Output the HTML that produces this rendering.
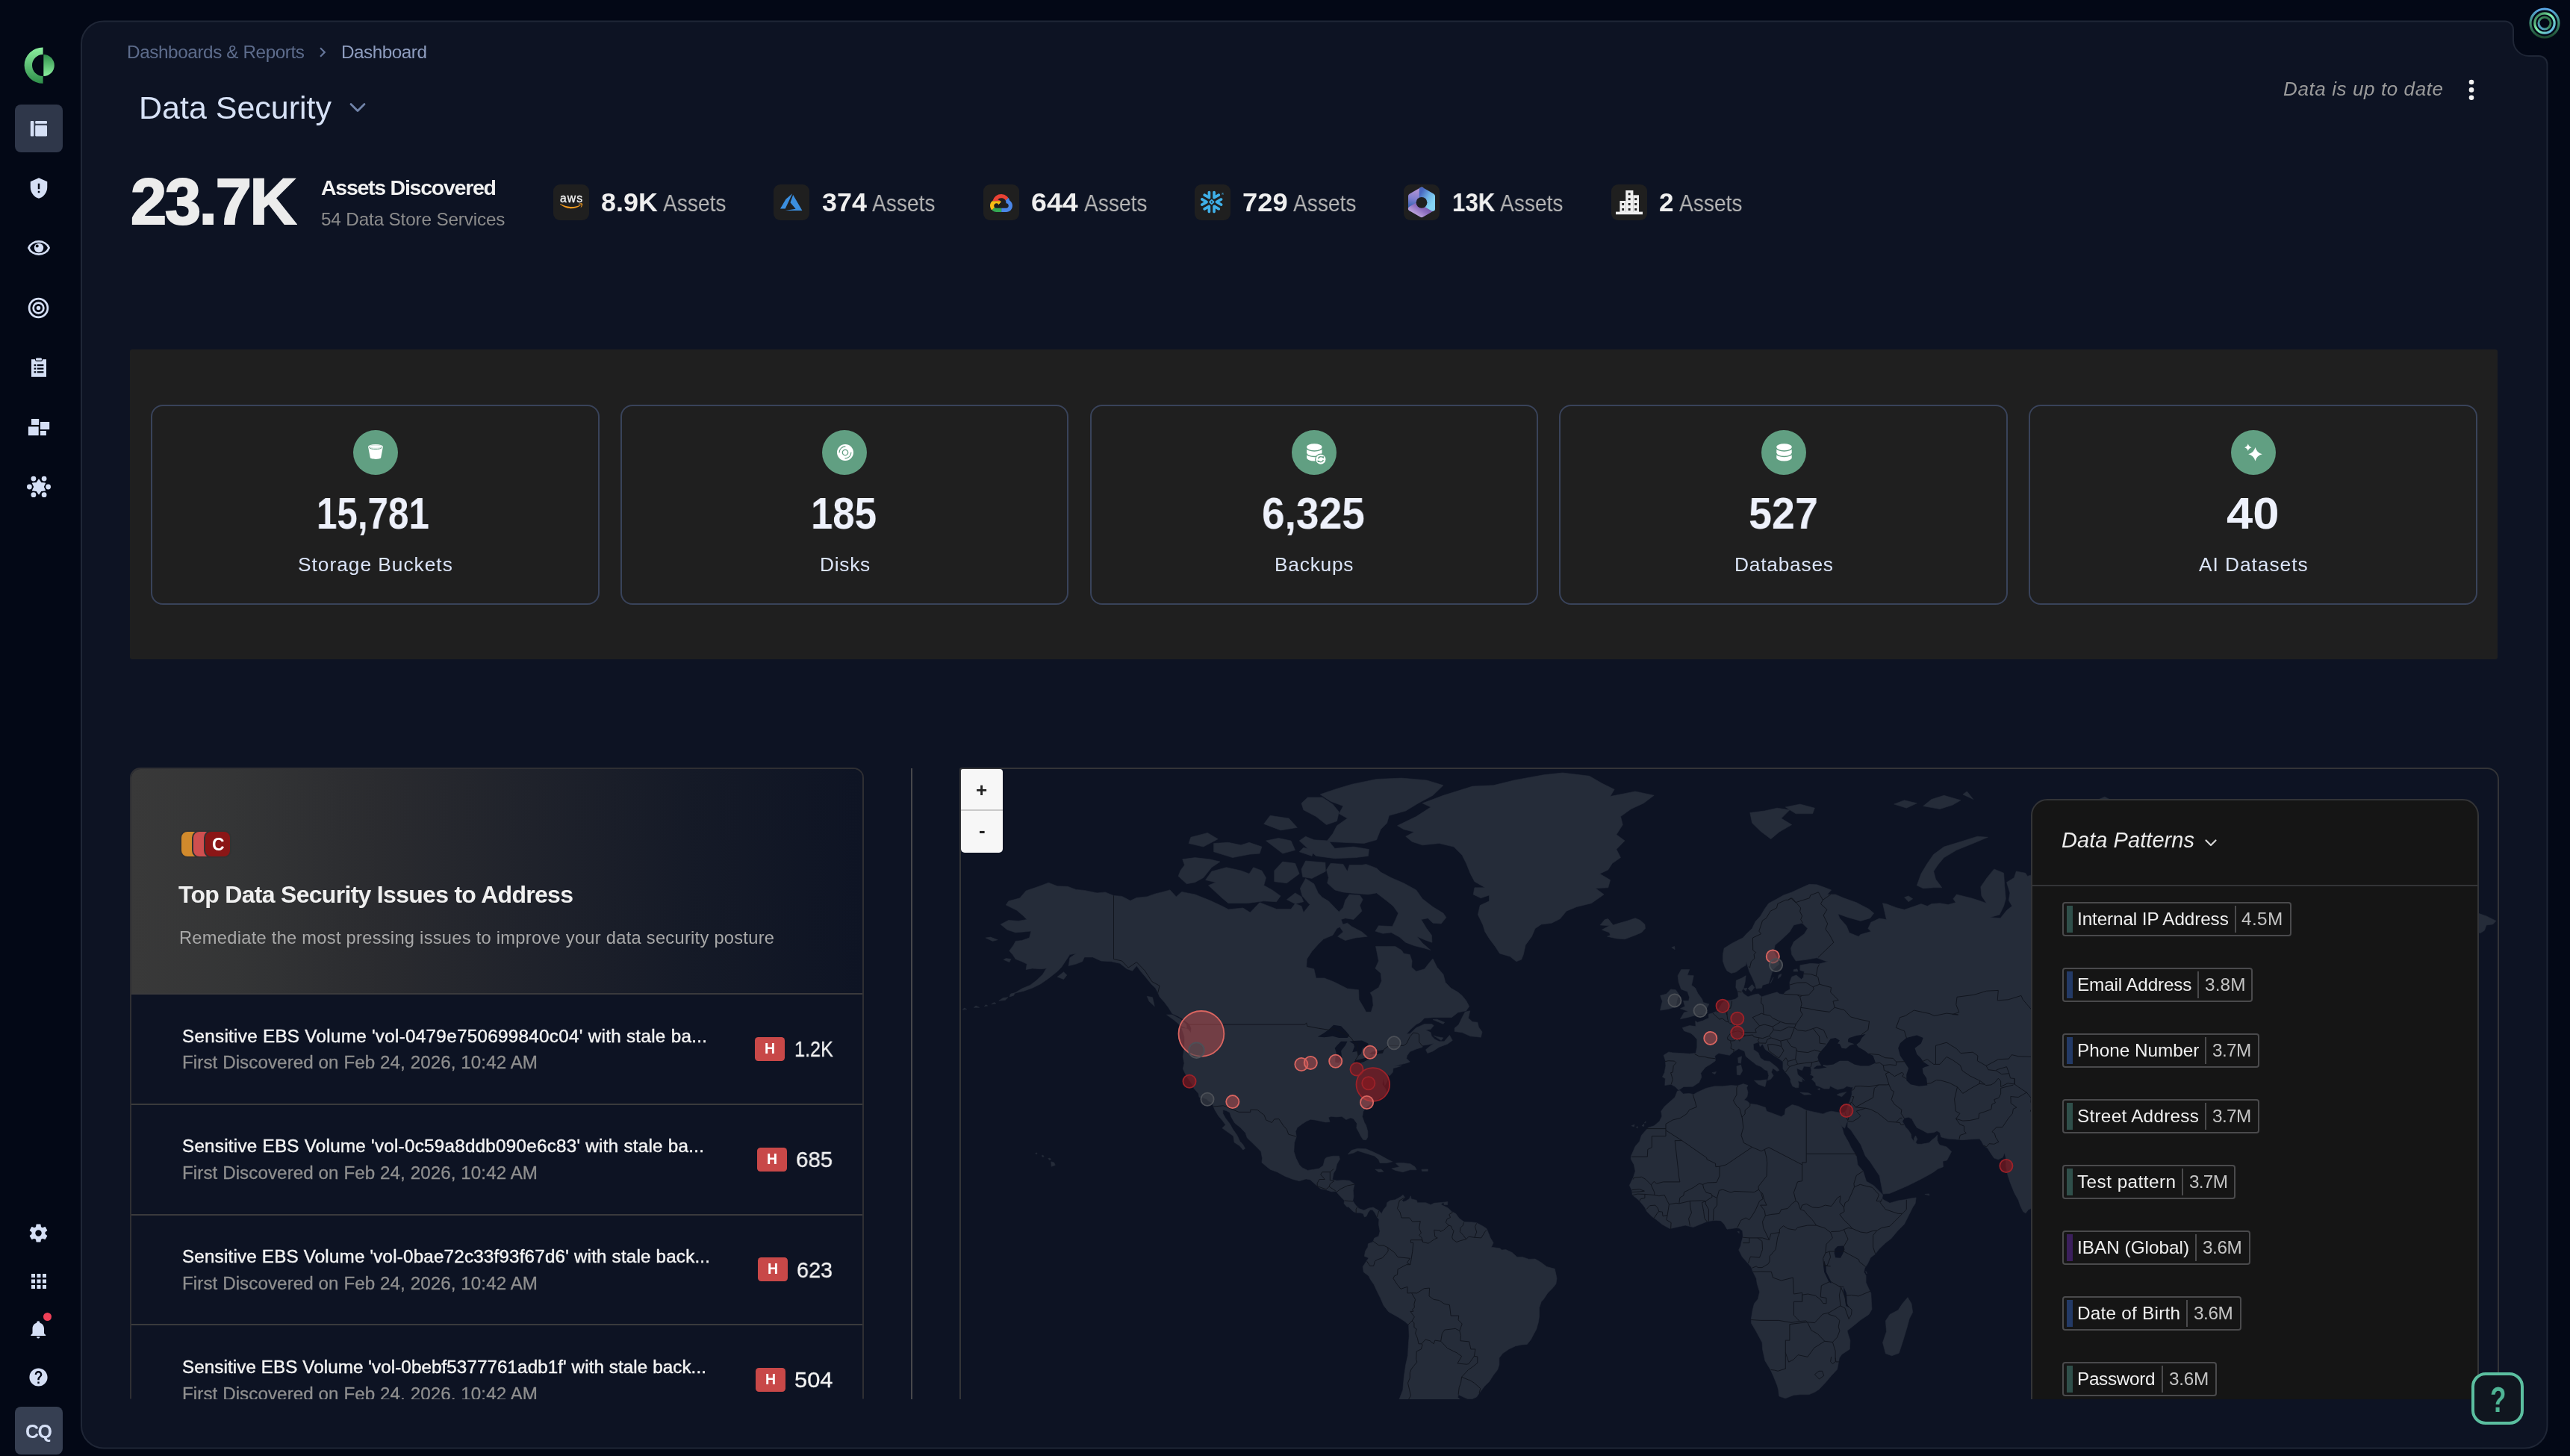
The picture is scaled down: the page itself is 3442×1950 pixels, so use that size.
<!DOCTYPE html>
<html lang="en"><head><meta charset="utf-8"><title>Data Security Dashboard</title>
<style>
html,body{margin:0;padding:0;}
body{width:3442px;height:1950px;overflow:hidden;position:relative;background:#030816;font-family:"Liberation Sans",sans-serif;}
.abs{position:absolute;}
.t{position:absolute;white-space:nowrap;line-height:1;transform-origin:0 50%;will-change:transform;}
svg{position:absolute;overflow:visible;}
.bx{position:absolute;box-sizing:border-box;}
.sk2{-webkit-text-stroke:2.2px #ececec;}
.sk3{-webkit-text-stroke:0.3px #f2f2f2;}
.sk4{-webkit-text-stroke:0.45px #f2f2f2;}
.sk5{-webkit-text-stroke:0.3px #8f8f8f;}

</style></head>
<body>
<svg width="3442" height="1950" viewBox="0 0 3442 1950" style="left:0;top:0"><defs><linearGradient id="lg1" x1="0" y1="0" x2="0" y2="1"><stop offset="0" stop-color="#8cf0a0"/><stop offset="1" stop-color="#2f8f4a"/></linearGradient><linearGradient id="lg2" x1="0" y1="0" x2="0" y2="1"><stop offset="0" stop-color="#2f8f4a"/><stop offset="1" stop-color="#8cf0a0"/></linearGradient><linearGradient id="orb1" x1="0" y1="0" x2="0" y2="1"><stop offset="0" stop-color="#5aa8e8"/><stop offset="0.5" stop-color="#3f8f70"/><stop offset="1" stop-color="#1d4a30"/></linearGradient><linearGradient id="orb2" x1="0" y1="0" x2="1" y2="1"><stop offset="0" stop-color="#2c6b45"/><stop offset="0.45" stop-color="#7ff0a8"/><stop offset="1" stop-color="#58a6ea"/></linearGradient><linearGradient id="orb3" x1="1" y1="0" x2="0" y2="1"><stop offset="0" stop-color="#2c6b45"/><stop offset="0.5" stop-color="#3f8f60"/><stop offset="1" stop-color="#58a6ea"/></linearGradient></defs><path d="M139 28.5H3355A11 11 0 0 1 3366 39.5V54A21 21 0 0 0 3387 75H3400.5A11 11 0 0 1 3411.5 86V1909.5A30 30 0 0 1 3381.5 1939.5H139A30 30 0 0 1 109 1909.5V58.5A30 30 0 0 1 139 28.5Z" fill="#0d1323" stroke="#1f2636" stroke-width="2"/><circle cx="3408" cy="31" r="19" fill="none" stroke="url(#orb1)" stroke-width="3.2"/><circle cx="3408" cy="31" r="13.2" fill="none" stroke="url(#orb2)" stroke-width="3.2"/><circle cx="3408" cy="31" r="8" fill="none" stroke="url(#orb3)" stroke-width="3"/><path d="M57.6 63.4A25 24.2 0 0 0 57.6 111.8V102.1A14.6 14.5 0 0 1 57.6 73.1Z" fill="url(#lg1)"/><path d="M58.3 73.1A14.5 14.5 0 0 1 58.3 102.1Z" fill="url(#lg2)"/></svg><div class="bx" style="left:20px;top:140px;width:64px;height:64px;border-radius:8px;background:#2f374a"></div><svg width="24" height="22" viewBox="0 0 24 22" style="left:40px;top:161px"><rect x="0.8" y="1" width="4.6" height="20.4" rx="1" fill="#d5dff5"/><rect x="7.2" y="1" width="15.8" height="3.8" rx="1" fill="#d5dff5"/><rect x="7.2" y="6.8" width="15.8" height="14.6" rx="1.2" fill="#d5dff5"/></svg><svg width="30" height="30" viewBox="0 0 24 24" style="left:36.8px;top:237.3px"><path d="M12 1 3 5v6c0 5.55 3.84 10.74 9 12 5.16-1.26 9-6.45 9-12V5M11 7h2v6h-2m0 2h2v2h-2" fill="#d5dff5"/></svg><svg width="32" height="22" viewBox="0 0 32 22" style="left:35.8px;top:321px"><path d="M2.4 11C7 -0.4 25 -0.4 29.6 11C25 22.4 7 22.4 2.4 11Z" fill="none" stroke="#d5dff5" stroke-width="2.8" stroke-linejoin="round"/><circle cx="16" cy="11" r="6.2" fill="#d5dff5"/><circle cx="13.7" cy="8.6" r="2" fill="#030816"/></svg><svg width="33" height="33" viewBox="0 0 24 24" style="left:35.2px;top:395.5px"><path d="M12 2A10 10 0 0 0 2 12a10 10 0 0 0 10 10 10 10 0 0 0 10-10A10 10 0 0 0 12 2m0 2a8 8 0 0 1 8 8 8 8 0 0 1-8 8 8 8 0 0 1-8-8 8 8 0 0 1 8-8m0 2a6 6 0 0 0-6 6 6 6 0 0 0 6 6 6 6 0 0 0 6-6 6 6 0 0 0-6-6m0 2a4 4 0 0 1 4 4 4 4 0 0 1-4 4 4 4 0 0 1-4-4 4 4 0 0 1 4-4m0 2a2 2 0 0 0-2 2 2 2 0 0 0 2 2 2 2 0 0 0 2-2 2 2 0 0 0-2-2" fill="#d5dff5"/></svg><svg width="24" height="28" viewBox="0 0 24 28" style="left:39.7px;top:478px"><path d="M2 3.2H22V26.8H2Z" fill="#d5dff5"/><rect x="7.5" y="1" width="9" height="4.4" rx="1.6" fill="#d5dff5" stroke="#030816" stroke-width="1.1"/><g fill="#030816"><rect x="5.6" y="10" width="2.6" height="2.2"/><rect x="9.8" y="10" width="8.6" height="2.2"/><rect x="5.6" y="14.6" width="2.6" height="2.2"/><rect x="9.8" y="14.6" width="8.6" height="2.2"/><rect x="5.6" y="19.2" width="2.6" height="2.2"/><rect x="9.8" y="19.2" width="8.6" height="2.2"/></g></svg><svg width="32" height="26" viewBox="0 0 32 26" style="left:37px;top:559px"><rect x="5" y="2" width="10.2" height="8" fill="#d5dff5"/><rect x="17" y="6" width="12.2" height="10.2" fill="#d5dff5"/><rect x="0.9" y="12.4" width="13.8" height="11.8" fill="#d5dff5"/><rect x="17" y="18" width="7.9" height="6.2" fill="#d5dff5"/></svg><svg width="32" height="28" viewBox="0 0 32 28" style="left:35.7px;top:638.3px"><polygon points="16.00,4.40 13.00,8.80 7.69,9.20 10.00,14.00 7.69,18.80 13.00,19.20 16.00,23.60 19.00,19.20 24.31,18.80 22.00,14.00 24.31,9.20 19.00,8.80" fill="#d5dff5" stroke="#d5dff5" stroke-width="1.5" stroke-linejoin="round"/><circle cx="8.9" cy="3.0999999999999996" r="3.4" fill="#d5dff5"/><circle cx="23.1" cy="3.0999999999999996" r="3.4" fill="#d5dff5"/><circle cx="3.4000000000000004" cy="14" r="3.4" fill="#d5dff5"/><circle cx="28.6" cy="14" r="3.4" fill="#d5dff5"/><circle cx="8.9" cy="24.7" r="3.4" fill="#d5dff5"/><circle cx="23.1" cy="24.7" r="3.4" fill="#d5dff5"/></svg><svg width="29" height="29" viewBox="0 0 24 24" style="left:37.2px;top:1637.2px"><path d="M12 15.5A3.5 3.5 0 0 1 8.5 12 3.5 3.5 0 0 1 12 8.5a3.5 3.5 0 0 1 3.5 3.5 3.5 3.5 0 0 1-3.5 3.5m7.43-2.53c.04-.32.07-.64.07-.97s-.03-.66-.07-1l2.11-1.63c.19-.15.24-.42.12-.64l-2-3.46c-.12-.22-.39-.31-.61-.22l-2.49 1c-.52-.39-1.06-.73-1.69-.98l-.37-2.65A.506.506 0 0 0 14 2h-4c-.25 0-.46.18-.5.42l-.37 2.65c-.63.25-1.17.59-1.69.98l-2.49-1c-.22-.09-.49 0-.61.22l-2 3.46c-.13.22-.07.49.12.64L4.57 11c-.04.34-.07.67-.07 1s.03.65.07.97l-2.11 1.66c-.19.15-.25.42-.12.64l2 3.46c.12.22.39.3.61.22l2.49-1.01c.52.4 1.06.74 1.69.99l.37 2.65c.04.24.25.42.5.42h4c.25 0 .46-.18.5-.42l.37-2.65c.63-.26 1.17-.59 1.69-.99l2.49 1.01c.22.08.49 0 .61-.22l2-3.46c.12-.22.07-.49-.12-.64z" fill="#d5dff5"/></svg><svg width="30" height="30" viewBox="0 0 24 24" style="left:36.7px;top:1701.0px"><path d="M16 20h4v-4h-4m0-2h4v-4h-4m-6-2h4V4h-4m6 4h4V4h-4m-6 10h4v-4h-4m-6 4h4v-4H4m0 10h4v-4H4m6 4h4v-4h-4M4 8h4V4H4z" fill="#d5dff5"/></svg><svg width="26.5" height="26.5" viewBox="0 0 24 24" style="left:38.2px;top:1767.2px"><path d="M21 19v1H3v-1l2-2v-6c0-3.1 2.03-5.83 5-6.71V4a2 2 0 0 1 2-2 2 2 0 0 1 2 2v.29c2.97.88 5 3.61 5 6.71v6zm-7 2a2 2 0 0 1-2 2 2 2 0 0 1-2-2" fill="#d5dff5"/></svg><div class="bx" style="left:57.5px;top:1757.5px;width:11px;height:11px;border-radius:50%;background:#ef4058"></div><svg width="29" height="29" viewBox="0 0 24 24" style="left:37.2px;top:1829.5px"><path d="m15.07 11.25-.9.92C13.45 12.89 13 13.5 13 15h-2v-.5c0-1.11.45-2.11 1.17-2.83l1.24-1.26c.37-.36.59-.86.59-1.41a2 2 0 0 0-2-2 2 2 0 0 0-2 2H8a4 4 0 0 1 4-4 4 4 0 0 1 4 4 3.2 3.2 0 0 1-.93 2.25M13 19h-2v-2h2M12 2A10 10 0 0 0 2 12a10 10 0 0 0 10 10 10 10 0 0 0 10-10c0-5.53-4.5-10-10-10" fill="#d5dff5"/></svg><div class="bx" style="left:20px;top:1884px;width:64px;height:64px;border-radius:8px;background:#363f52"></div><div class="t " id="t0" style="font-size:25px;font-weight:700;color:#d5dff5;letter-spacing:-1.500px;left:33.7px;top:1905.4px;">CQ</div><div class="t " id="t1" style="font-size:24.3px;font-weight:400;color:#5d6c8c;letter-spacing:-0.410px;left:170.0px;top:57.8px;">Dashboards &amp; Reports</div><svg width="26" height="26" viewBox="0 0 24 24" style="left:419px;top:57px"><path d="M8.59 16.58 13.17 12 8.59 7.41 10 6l6 6-6 6z" fill="#66769a"/></svg><div class="t " id="t2" style="font-size:24.3px;font-weight:400;color:#8e9dbf;letter-spacing:-0.484px;left:457.0px;top:57.8px;">Dashboard</div><div class="t " id="t3" style="font-size:43px;font-weight:400;color:#d6e1f6;letter-spacing:-0.009px;left:186.0px;top:122.6px;">Data Security</div><svg width="24" height="16" viewBox="0 0 24 16" style="left:467px;top:136px"><path d="M3 3.5L12 12.5L21 3.5" fill="none" stroke="#7184a9" stroke-width="2.8" stroke-linecap="round" stroke-linejoin="round"/></svg><div class="t " id="t4" style="font-size:26px;font-weight:400;color:#9b9b9b;font-style:italic;letter-spacing:0.599px;left:3058.0px;top:105.9px;">Data is up to date</div><svg width="10" height="34" viewBox="0 0 10 34" style="left:3304.9px;top:104px"><circle cx="5" cy="6" r="3.3" fill="#f2f2f2"/><circle cx="5" cy="16.4" r="3.3" fill="#f2f2f2"/><circle cx="5" cy="26.8" r="3.3" fill="#f2f2f2"/></svg><div class="t sk2" id="t5" style="font-size:86.5px;font-weight:700;color:#ececec;letter-spacing:-2.207px;left:174.5px;top:227.2px;">23.7K</div><div class="t " id="t6" style="font-size:28.5px;font-weight:700;color:#f1f1f1;letter-spacing:-1.254px;left:430.0px;top:237.0px;">Assets Discovered</div><div class="t " id="t7" style="font-size:24.3px;font-weight:400;color:#8c8c8c;letter-spacing:-0.159px;left:430.0px;top:281.5px;">54 Data Store Services</div><div class="bx" style="left:741.0px;top:247px;width:48px;height:48px;border-radius:9px;background:#1f1f1f"></div><div class="t " id="t8" style="font-size:34.5px;font-weight:700;color:#efefef;transform:scaleX(1.0401);left:805.2px;top:254.4px;">8.9K</div><div class="t " id="t9" style="font-size:31.5px;font-weight:400;color:#b4b4b4;transform:scaleX(0.8939);left:887.9px;top:257.0px;">Assets</div><div class="bx" style="left:1036.3px;top:247px;width:48px;height:48px;border-radius:9px;background:#1f1f1f"></div><div class="t " id="t10" style="font-size:34.5px;font-weight:700;color:#efefef;transform:scaleX(1.0423);left:1100.5px;top:254.4px;">374</div><div class="t " id="t11" style="font-size:31.5px;font-weight:400;color:#b4b4b4;transform:scaleX(0.8939);left:1167.7px;top:257.0px;">Assets</div><div class="bx" style="left:1317.4px;top:247px;width:48px;height:48px;border-radius:9px;background:#1f1f1f"></div><div class="t " id="t12" style="font-size:34.5px;font-weight:700;color:#efefef;transform:scaleX(1.0910);left:1380.7px;top:254.4px;">644</div><div class="t " id="t13" style="font-size:31.5px;font-weight:400;color:#b4b4b4;transform:scaleX(0.8939);left:1452.2px;top:257.0px;">Assets</div><div class="bx" style="left:1600.2px;top:247px;width:48px;height:48px;border-radius:9px;background:#1f1f1f"></div><div class="t " id="t14" style="font-size:34.5px;font-weight:700;color:#efefef;transform:scaleX(1.0528);left:1663.8px;top:254.4px;">729</div><div class="t " id="t15" style="font-size:31.5px;font-weight:400;color:#b4b4b4;transform:scaleX(0.8939);left:1731.6px;top:257.0px;">Assets</div><div class="bx" style="left:1880.3px;top:247px;width:48px;height:48px;border-radius:9px;background:#1f1f1f"></div><div class="t " id="t16" style="font-size:34.5px;font-weight:700;color:#efefef;transform:scaleX(0.9084);left:1945.0px;top:254.4px;">13K</div><div class="t " id="t17" style="font-size:31.5px;font-weight:400;color:#b4b4b4;transform:scaleX(0.8939);left:2009.1px;top:257.0px;">Assets</div><div class="bx" style="left:2158.1px;top:247px;width:48px;height:48px;border-radius:9px;background:#1f1f1f"></div><div class="t " id="t18" style="font-size:34.5px;font-weight:700;color:#efefef;transform:scaleX(1.0163);left:2221.8px;top:254.4px;">2</div><div class="t " id="t19" style="font-size:31.5px;font-weight:400;color:#b4b4b4;transform:scaleX(0.8939);left:2249.2px;top:257.0px;">Assets</div><svg width="30.2" height="24.16" viewBox="0 0 640 512" style="left:750.2px;top:257.8px"><path d="M578.6 369c-70 51.7-171.7 79.2-258.5 79.2C203 449 89.8 405.9 2.8 327.5c-6.5-5.9-.8-14 7.2-9.5 96.5 55.2 205.7 84.2 316.9 84.1 83-.4 165.1-17.3 241.6-49.5 11.8-5 21.8 7.8 10.1 16.4M607.8 335.7c-9-11.5-59.3-5.4-81.8-2.7-6.8.8-7.9-5.1-1.8-9.5 40.1-28.2 105.9-20.1 113.4-10.6s-2.1 75.4-39.6 106.9c-5.8 4.9-11.3 2.3-8.7-4.1 8.4-21.3 27.4-68.5 18.4-80z" fill="#f29a1f"/></svg><svg width="29.4" height="29.4" viewBox="0 0 24 24" style="left:1045.3px;top:256.1px"><path d="M5.483 21.3H24L14.025 4.013l-3.038 8.347 5.836 6.938L5.483 21.3zM13.23 2.7L6.105 8.677 0 19.253h5.505v.014L13.23 2.7z" fill="#3b8ede"/></svg><svg width="30.0" height="30.0" viewBox="0 0 24 24" style="left:1326.0px;top:257.0px"><defs><clipPath id="gcr"><polygon points="3,0 21,0 21,5 16.2,9.6 12,9.8 7.2,9.8 2.2,9.8"/></clipPath><clipPath id="gcb"><polygon points="24,4 24,24 12.1,24 12.1,16 16,12 16.2,9.6 21,5"/></clipPath><clipPath id="gcg"><polygon points="12.1,24 12.1,16 5,16.5 2.2,19.2 3,24"/></clipPath><clipPath id="gcy"><polygon points="0,8 2.2,9.8 7.2,9.8 12.5,9.8 9.2,14 5,16.5 2.2,19.2 0,20"/></clipPath></defs><path d="M12.19 2.38a9.344 9.344 0 0 0-9.234 6.893c.053-.02-.055.013 0 0-3.875 2.551-3.922 8.11-.247 10.941l.006-.007-.007.03a6.7 6.7 0 0 0 4.077 1.356h5.173l.03.03h5.192c6.687.053 9.376-8.605 3.835-12.35a9.37 9.37 0 0 0-2.821-4.552l-.043.043.006-.05A9.34 9.34 0 0 0 12.19 2.38m-.358 4.146c1.244-.04 2.518.368 3.486 1.15a5.19 5.19 0 0 1 1.862 4.078v.518c3.53-.07 3.53 5.262 0 5.193h-5.193l-.008.009v-.04H6.785a2.6 2.6 0 0 1-1.067-.23h.001a2.597 2.597 0 1 1 3.437-3.437l3.013-3.012A6.75 6.75 0 0 0 8.11 8.24c.018-.01.04-.026.054-.023a5.19 5.19 0 0 1 3.67-1.69z" fill="#e94235" clip-path="url(#gcr)"/><path d="M12.19 2.38a9.344 9.344 0 0 0-9.234 6.893c.053-.02-.055.013 0 0-3.875 2.551-3.922 8.11-.247 10.941l.006-.007-.007.03a6.7 6.7 0 0 0 4.077 1.356h5.173l.03.03h5.192c6.687.053 9.376-8.605 3.835-12.35a9.37 9.37 0 0 0-2.821-4.552l-.043.043.006-.05A9.34 9.34 0 0 0 12.19 2.38m-.358 4.146c1.244-.04 2.518.368 3.486 1.15a5.19 5.19 0 0 1 1.862 4.078v.518c3.53-.07 3.53 5.262 0 5.193h-5.193l-.008.009v-.04H6.785a2.6 2.6 0 0 1-1.067-.23h.001a2.597 2.597 0 1 1 3.437-3.437l3.013-3.012A6.75 6.75 0 0 0 8.11 8.24c.018-.01.04-.026.054-.023a5.19 5.19 0 0 1 3.67-1.69z" fill="#4a86e8" clip-path="url(#gcb)"/><path d="M12.19 2.38a9.344 9.344 0 0 0-9.234 6.893c.053-.02-.055.013 0 0-3.875 2.551-3.922 8.11-.247 10.941l.006-.007-.007.03a6.7 6.7 0 0 0 4.077 1.356h5.173l.03.03h5.192c6.687.053 9.376-8.605 3.835-12.35a9.37 9.37 0 0 0-2.821-4.552l-.043.043.006-.05A9.34 9.34 0 0 0 12.19 2.38m-.358 4.146c1.244-.04 2.518.368 3.486 1.15a5.19 5.19 0 0 1 1.862 4.078v.518c3.53-.07 3.53 5.262 0 5.193h-5.193l-.008.009v-.04H6.785a2.6 2.6 0 0 1-1.067-.23h.001a2.597 2.597 0 1 1 3.437-3.437l3.013-3.012A6.75 6.75 0 0 0 8.11 8.24c.018-.01.04-.026.054-.023a5.19 5.19 0 0 1 3.67-1.69z" fill="#34a853" clip-path="url(#gcg)"/><path d="M12.19 2.38a9.344 9.344 0 0 0-9.234 6.893c.053-.02-.055.013 0 0-3.875 2.551-3.922 8.11-.247 10.941l.006-.007-.007.03a6.7 6.7 0 0 0 4.077 1.356h5.173l.03.03h5.192c6.687.053 9.376-8.605 3.835-12.35a9.37 9.37 0 0 0-2.821-4.552l-.043.043.006-.05A9.34 9.34 0 0 0 12.19 2.38m-.358 4.146c1.244-.04 2.518.368 3.486 1.15a5.19 5.19 0 0 1 1.862 4.078v.518c3.53-.07 3.53 5.262 0 5.193h-5.193l-.008.009v-.04H6.785a2.6 2.6 0 0 1-1.067-.23h.001a2.597 2.597 0 1 1 3.437-3.437l3.013-3.012A6.75 6.75 0 0 0 8.11 8.24c.018-.01.04-.026.054-.023a5.19 5.19 0 0 1 3.67-1.69z" fill="#f9bc15" clip-path="url(#gcy)"/></svg><svg width="31.0" height="31.0" viewBox="0 0 24 24" style="left:1608.3px;top:255.3px"><path d="M24 3.459c0 .646-.418 1.18-1.141 1.18s-1.142-.534-1.142-1.18c0-.647.419-1.18 1.142-1.18S24 2.812 24 3.459m-.228 0c0-.533-.38-.951-.913-.951s-.913.38-.913.95c0 .533.38.952.913.952.57 0 .913-.419.913-.951m-1.37-.533h.495c.266 0 .456.152.456.38 0 .153-.076.229-.19.305l.19.266v.038h-.266l-.19-.266h-.229v.266h-.266zm.495.228h-.229v.267h.229c.114 0 .152-.038.152-.114.038-.077-.038-.153-.152-.153M7.602 12.4a2 2 0 0 0 .076-.456c0-.114-.038-.228-.038-.342-.114-.343-.304-.647-.646-.838l-4.87-2.777c-.685-.38-1.56-.152-1.94.533-.381.685-.153 1.56.532 1.94l2.701 1.56-2.701 1.56c-.685.38-.913 1.256-.533 1.94.38.685 1.256.914 1.94.533l4.832-2.777c.343-.267.571-.533.647-.876m1.332 2.626c-.266-.038-.57.038-.837.19l-4.832 2.777c-.685.38-.913 1.256-.532 1.94.38.686 1.255.914 1.94.533l2.701-1.56v3.12c0 .8.647 1.408 1.446 1.408s1.407-.647 1.407-1.408v-5.592c0-.761-.57-1.37-1.293-1.408m4.946-6.088c.266.038.57-.038.837-.19l4.832-2.777c.685-.38.913-1.256.532-1.94-.38-.686-1.255-.914-1.94-.533l-2.701 1.56V1.975c0-.799-.647-1.408-1.446-1.408s-1.446.609-1.446 1.408V7.53c0 .76.609 1.37 1.332 1.407zM3.265 5.97l4.832 2.777c.266.152.533.19.837.19.723-.038 1.331-.684 1.331-1.407V1.975c0-.799-.646-1.408-1.407-1.408-.799 0-1.446.647-1.446 1.408v3.12l-2.701-1.56c-.685-.38-1.56-.152-1.94.533-.419.646-.19 1.521.494 1.902m9.093 6.011a.4.4 0 0 0-.114-.266l-.57-.571a.35.35 0 0 0-.267-.114.4.4 0 0 0-.266.114l-.571.57a.4.4 0 0 0-.114.267c0 .076.038.19.114.267l.57.57a.35.35 0 0 0 .267.114.4.4 0 0 0 .266-.114l.571-.57a.4.4 0 0 0 .114-.267m1.598.533L11.94 14.53c-.039.038-.153.114-.229.114h-.608a.4.4 0 0 1-.267-.114L8.82 12.514a.4.4 0 0 1-.076-.229v-.608c0-.076.038-.19.114-.267l2.016-2.016a.4.4 0 0 1 .267-.114h.608a.4.4 0 0 1 .267.114l2.016 2.016a.35.35 0 0 1 .114.267v.608c-.076.077-.114.19-.19.229m5.593 5.44-4.832-2.777c-.266-.152-.57-.19-.837-.152-.723.038-1.332.684-1.332 1.408v5.554c0 .8.647 1.408 1.408 1.408.799 0 1.446-.647 1.446-1.408v-3.12l2.7 1.56c.686.38 1.561.152 1.941-.533.419-.646.19-1.521-.494-1.94m2.549-7.533-2.701 1.56 2.7 1.56c.686.38.914 1.256.533 1.94-.38.685-1.255.913-1.94.533l-4.832-2.778a1.64 1.64 0 0 1-.647-.798c-.037-.153-.076-.305-.076-.457 0-.114.039-.228.039-.342.114-.343.342-.647.646-.837l4.832-2.778c.685-.38 1.56-.152 1.94.533.457.609.19 1.484-.494 1.864" fill="#3fb0e8"/></svg><svg width="50" height="50" viewBox="1879.1 245.8 50 50" style="left:1879.1px;top:245.8px"><defs><linearGradient id="m1" x1="0.1" y1="0" x2="0.9" y2="0.8"><stop offset="0" stop-color="#4868c0"/><stop offset="0.55" stop-color="#6fb4e6"/><stop offset="1" stop-color="#86d6f2"/></linearGradient><linearGradient id="m2" x1="1" y1="0.1" x2="0.1" y2="0.9"><stop offset="0" stop-color="#5e3f92"/><stop offset="0.6" stop-color="#9071c0"/><stop offset="1" stop-color="#c2a8de"/></linearGradient><linearGradient id="m3" x1="0.5" y1="0" x2="0.4" y2="1"><stop offset="0" stop-color="#b193d2"/><stop offset="0.5" stop-color="#7f7fcf"/><stop offset="1" stop-color="#2f5fae"/></linearGradient></defs><path d="M1904.10 270.80L1889.38 279.30L1889.38 262.30L1904.10 253.80Z" fill="url(#m3)" stroke="url(#m3)" stroke-width="6.5" stroke-linejoin="round"/><path d="M1904.10 270.80L1918.82 279.30L1904.10 287.80L1889.38 279.30Z" fill="url(#m2)" stroke="url(#m2)" stroke-width="6.5" stroke-linejoin="round"/><path d="M1904.10 270.80L1904.10 253.80L1918.82 262.30L1918.82 279.30Z" fill="url(#m1)" stroke="url(#m1)" stroke-width="6.5" stroke-linejoin="round"/><path d="M1904.1 270.8L1904.10 253.80L1889.38 262.30L1895.1 267.8Z" fill="url(#m3)" stroke="url(#m3)" stroke-width="6.5" stroke-linejoin="round" opacity="0"/><circle cx="1904.1" cy="271.1" r="7.4" fill="#1f1f1f"/></svg><svg width="36" height="33" viewBox="0 0 36 33" style="left:2163.9px;top:254.7px"><rect x="0.0" y="28.6" width="36.0" height="3.6" fill="#efefef"/><rect x="13.3" y="0.0" width="10.1" height="29.0" fill="#efefef"/><rect x="5.4" y="14.0" width="8.0" height="15.0" fill="#efefef"/><rect x="23.3" y="6.3" width="7.7" height="23.0" fill="#efefef"/><rect x="8.2" y="17.0" width="2.9" height="2.9" fill="#1f1f1f"/><rect x="8.2" y="24.0" width="2.9" height="2.9" fill="#1f1f1f"/><rect x="16.7" y="3.4" width="2.9" height="2.9" fill="#1f1f1f"/><rect x="16.7" y="10.2" width="2.9" height="2.9" fill="#1f1f1f"/><rect x="16.7" y="17.0" width="2.9" height="2.9" fill="#1f1f1f"/><rect x="16.7" y="24.0" width="2.9" height="2.9" fill="#1f1f1f"/><rect x="25.3" y="10.2" width="2.9" height="2.9" fill="#1f1f1f"/><rect x="25.3" y="17.0" width="2.9" height="2.9" fill="#1f1f1f"/><rect x="25.3" y="24.0" width="2.9" height="2.9" fill="#1f1f1f"/></svg><div class="t sk3" id="t20" style="font-size:15.8px;font-weight:400;color:#f4f4f4;letter-spacing:1.053px;left:749.9px;top:257.8px;">aws</div><div class="bx" style="left:174px;top:468px;width:3171px;height:415px;background:#1f1f1f;border-radius:3px"></div><div class="bx" style="left:202.0px;top:542px;width:600.5px;height:268px;border:2px solid #39435a;border-radius:16px"></div><div class="bx" style="left:472.5px;top:576px;width:60px;height:60px;border-radius:50%;background:#619f82"></div><div class="t " id="t21" style="font-size:59.5px;font-weight:700;color:#eef1fb;transform:scaleX(0.8286);left:424.4px;top:658.0px;">15,781</div><div class="t " id="t22" style="font-size:26.3px;font-weight:400;color:#dbe4f8;letter-spacing:0.989px;left:399.1px;top:743.1px;">Storage Buckets</div><div class="bx" style="left:830.8px;top:542px;width:600.5px;height:268px;border:2px solid #39435a;border-radius:16px"></div><div class="bx" style="left:1101.3px;top:576px;width:60px;height:60px;border-radius:50%;background:#619f82"></div><div class="t " id="t23" style="font-size:59.5px;font-weight:700;color:#eef1fb;transform:scaleX(0.8859);left:1086.0px;top:658.0px;">185</div><div class="t " id="t24" style="font-size:26.3px;font-weight:400;color:#dbe4f8;letter-spacing:0.730px;left:1097.7px;top:743.1px;">Disks</div><div class="bx" style="left:1459.6px;top:542px;width:600.5px;height:268px;border:2px solid #39435a;border-radius:16px"></div><div class="bx" style="left:1730.1px;top:576px;width:60px;height:60px;border-radius:50%;background:#619f82"></div><div class="t " id="t25" style="font-size:59.5px;font-weight:700;color:#eef1fb;transform:scaleX(0.9261);left:1689.9px;top:658.0px;">6,325</div><div class="t " id="t26" style="font-size:26.3px;font-weight:400;color:#dbe4f8;letter-spacing:0.771px;left:1707.3px;top:743.1px;">Backups</div><div class="bx" style="left:2088.4px;top:542px;width:600.5px;height:268px;border:2px solid #39435a;border-radius:16px"></div><div class="bx" style="left:2358.9px;top:576px;width:60px;height:60px;border-radius:50%;background:#619f82"></div><div class="t " id="t27" style="font-size:59.5px;font-weight:700;color:#eef1fb;transform:scaleX(0.9357);left:2342.4px;top:658.0px;">527</div><div class="t " id="t28" style="font-size:26.3px;font-weight:400;color:#dbe4f8;letter-spacing:0.783px;left:2322.9px;top:743.1px;">Databases</div><div class="bx" style="left:2717.2px;top:542px;width:600.5px;height:268px;border:2px solid #39435a;border-radius:16px"></div><div class="bx" style="left:2987.7px;top:576px;width:60px;height:60px;border-radius:50%;background:#619f82"></div><div class="t " id="t29" style="font-size:59.5px;font-weight:700;color:#eef1fb;transform:scaleX(1.0652);left:2981.9px;top:658.0px;">40</div><div class="t " id="t30" style="font-size:26.3px;font-weight:400;color:#dbe4f8;letter-spacing:0.966px;left:2944.9px;top:743.1px;">AI Datasets</div><svg width="24" height="26" viewBox="-12 -13 24 26" style="left:491.0px;top:593.0px"><path d="M-9.9 -7.4 L-7.2 6.8 C-7 9.6 7 9.6 7.2 6.8 L9.9 -7.4 Z" fill="#fff"/><ellipse cx="0" cy="-7.6" rx="9.9" ry="3.3" fill="#fff"/><path d="M-8.8 -6.6 C-6 -3.6 6 -3.6 8.8 -6.6" fill="none" stroke="#619f82" stroke-width="1"/><ellipse cx="0" cy="-7.8" rx="8.4" ry="2.1" fill="none" stroke="#619f82" stroke-width="0.6" opacity="0.5"/></svg><svg width="26" height="26" viewBox="-13 -13 26 26" style="left:1118.9px;top:592.8px"><circle r="11" fill="#fff"/><circle r="3.7" fill="none" stroke="#619f82" stroke-width="1.3"/><path d="M-7.9 0 A7.9 7.9 0 0 1 0 -7.9" fill="none" stroke="#619f82" stroke-width="1.1" stroke-linecap="round"/><path d="M7.9 0 A7.9 7.9 0 0 1 0 7.9" fill="none" stroke="#619f82" stroke-width="1.1" stroke-linecap="round"/></svg><svg width="3442" height="100" viewBox="0 560 3442 100" style="left:0;top:560px"><path d="M1750.1 598.5 V613.1999999999999 A10.2 4.2 0 0 0 1770.5 613.1999999999999 V598.5 Z" fill="#fff"/><ellipse cx="1760.3" cy="598.5" rx="10.2" ry="4.2" fill="#fff"/><path d="M1749.6 599.4 A10.7 4.5 0 0 0 1771.0 599.4" fill="none" stroke="#619f82" stroke-width="1.5"/><path d="M1749.6 607.0 A10.7 4.5 0 0 0 1771.0 607.0" fill="none" stroke="#619f82" stroke-width="1.5"/><circle cx="1768.8999999999999" cy="615.2" r="7.8" fill="#619f82"/><circle cx="1768.8999999999999" cy="615.2" r="6.5" fill="#fff"/><path d="M1765.4999999999998 614.4000000000001 A3.5 3.5 0 0 1 1771.6999999999998 613.0" fill="none" stroke="#619f82" stroke-width="1.4"/><path d="M1772.3 616.0 A3.5 3.5 0 0 1 1766.1 617.4000000000001" fill="none" stroke="#619f82" stroke-width="1.4"/><path d="M1770.1 611.3000000000001 L1773.1 611.3000000000001 L1773.1 614.3000000000001 Z" fill="#619f82"/><path d="M1767.6999999999998 619.1 L1764.6999999999998 619.1 L1764.6999999999998 616.1 Z" fill="#619f82"/></svg><svg width="3442" height="100" viewBox="0 560 3442 100" style="left:0;top:560px"><path d="M2379.2999999999997 598.5 V613.1999999999999 A10.2 4.2 0 0 0 2399.6999999999994 613.1999999999999 V598.5 Z" fill="#fff"/><ellipse cx="2389.4999999999995" cy="598.5" rx="10.2" ry="4.2" fill="#fff"/><path d="M2378.7999999999997 599.4 A10.7 4.5 0 0 0 2400.1999999999994 599.4" fill="none" stroke="#619f82" stroke-width="1.5"/><path d="M2378.7999999999997 607.0 A10.7 4.5 0 0 0 2400.1999999999994 607.0" fill="none" stroke="#619f82" stroke-width="1.5"/></svg><svg width="3442" height="100" viewBox="0 560 3442 100" style="left:0;top:560px"><path d="M3020.5 599.0999999999999 Q3022.36 606.4599999999999 3029.8 608.3 Q3022.36 610.14 3020.5 617.5 Q3018.64 610.14 3011.2 608.3 Q3018.64 606.4599999999999 3020.5 599.0999999999999ZM3010.7999999999997 594.3000000000001 Q3011.74 598.22 3015.4999999999995 599.2 Q3011.74 600.1800000000001 3010.7999999999997 604.1 Q3009.8599999999997 600.1800000000001 3006.1 599.2 Q3009.8599999999997 598.22 3010.7999999999997 594.3000000000001Z" fill="#fff"/></svg><div class="bx" style="left:174px;top:1028px;width:983px;height:860px;border:2px solid #2f2f33;border-bottom:none;border-radius:14px 14px 0 0;overflow:hidden;clip-path:inset(0 0 14.5px 0)" id="issues"><div class="bx" style="left:0;top:0;width:979px;height:300px;background:linear-gradient(90deg,#393939 0%,#343536 14%,#2a2b2f 34%,#1f222b 55%,#151a27 76%,#0e1424 100%)"></div><div class="bx" style="left:0;top:300px;width:979px;height:2px;background:#3a3a3c"></div><div class="bx" style="left:0;top:447.7px;width:979px;height:2px;background:#3a3a3c"></div><div class="bx" style="left:0;top:595.5px;width:979px;height:2px;background:#3a3a3c"></div><div class="bx" style="left:0;top:743.4px;width:979px;height:2px;background:#3a3a3c"></div></div><div class="bx" style="left:241px;top:1112.3px;width:37px;height:37px;border-radius:10px;background:#d18a2c;border:2.5px solid #323232"></div><div class="bx" style="left:257px;top:1112.3px;width:37px;height:37px;border-radius:10px;background:#cf4f4f;border:2.5px solid #323232"></div><div class="bx" style="left:273px;top:1112.3px;width:37px;height:37px;border-radius:10px;background:#8b1616;border:2.5px solid #323232"></div><div class="t " id="t31" style="font-size:23px;font-weight:700;color:#ffffff;left:283.6px;top:1119.8px;">C</div><div class="t " id="t32" style="font-size:32px;font-weight:700;color:#efefef;letter-spacing:-0.707px;left:239.0px;top:1182.0px;">Top Data Security Issues to Address</div><div class="t " id="t33" style="font-size:23.7px;font-weight:400;color:#a9a9a9;letter-spacing:0.266px;left:239.5px;top:1245.0px;">Remediate the most pressing issues to improve your data security posture</div><div class="bx" style="left:176px;top:1333px;width:979px;height:540.5px;overflow:hidden" id="rows"><div class="t sk4" id="t34" style="font-size:24.2px;font-weight:400;color:#f2f2f2;letter-spacing:0.312px;left:68.0px;top:42.6px;">Sensitive EBS Volume 'vol-0479e750699840c04' with stale ba...</div><div class="t sk5" id="t35" style="font-size:24.2px;font-weight:400;color:#8f8f8f;letter-spacing:0.067px;left:68.0px;top:78.1px;">First Discovered on Feb 24, 2026, 10:42 AM</div><div class="bx" style="left:834.8px;top:55.7px;width:40.3px;height:32.2px;border-radius:4.5px;background:#c84848"></div><div class="t " id="t36" style="font-size:19.5px;font-weight:700;color:#ffffff;left:848.0px;top:61.7px;">H</div><div class="t sk3" id="t37" style="font-size:30px;font-weight:400;color:#f2f2f2;transform:scaleX(0.8393);left:887.6px;top:56.9px;">1.2K</div><div class="t sk4" id="t38" style="font-size:24.2px;font-weight:400;color:#f2f2f2;letter-spacing:0.268px;left:68.0px;top:190.4px;">Sensitive EBS Volume 'vol-0c59a8ddb090e6c83' with stale ba...</div><div class="t sk5" id="t39" style="font-size:24.2px;font-weight:400;color:#8f8f8f;letter-spacing:0.067px;left:68.0px;top:225.9px;">First Discovered on Feb 24, 2026, 10:42 AM</div><div class="bx" style="left:838.2px;top:203.5px;width:40.3px;height:32.2px;border-radius:4.5px;background:#c84848"></div><div class="t " id="t40" style="font-size:19.5px;font-weight:700;color:#ffffff;left:851.4px;top:209.5px;">H</div><div class="t sk3" id="t41" style="font-size:30px;font-weight:400;color:#f2f2f2;transform:scaleX(0.9828);left:890.2px;top:204.7px;">685</div><div class="t sk4" id="t42" style="font-size:24.2px;font-weight:400;color:#f2f2f2;letter-spacing:0.194px;left:68.0px;top:338.2px;">Sensitive EBS Volume 'vol-0bae72c33f93f67d6' with stale back...</div><div class="t sk5" id="t43" style="font-size:24.2px;font-weight:400;color:#8f8f8f;letter-spacing:0.067px;left:68.0px;top:373.7px;">First Discovered on Feb 24, 2026, 10:42 AM</div><div class="bx" style="left:838.9px;top:351.3px;width:40.3px;height:32.2px;border-radius:4.5px;background:#c84848"></div><div class="t " id="t44" style="font-size:19.5px;font-weight:700;color:#ffffff;left:852.1px;top:357.3px;">H</div><div class="t sk3" id="t45" style="font-size:30px;font-weight:400;color:#f2f2f2;transform:scaleX(0.9608);left:891.3px;top:352.5px;">623</div><div class="t sk4" id="t46" style="font-size:24.2px;font-weight:400;color:#f2f2f2;letter-spacing:0.091px;left:68.0px;top:486.0px;">Sensitive EBS Volume 'vol-0bebf5377761adb1f' with stale back...</div><div class="t sk5" id="t47" style="font-size:24.2px;font-weight:400;color:#8f8f8f;letter-spacing:0.067px;left:68.0px;top:521.5px;">First Discovered on Feb 24, 2026, 10:42 AM</div><div class="bx" style="left:835.9px;top:499.1px;width:40.3px;height:32.2px;border-radius:4.5px;background:#c84848"></div><div class="t " id="t48" style="font-size:19.5px;font-weight:700;color:#ffffff;left:849.1px;top:505.1px;">H</div><div class="t sk3" id="t49" style="font-size:30px;font-weight:400;color:#f2f2f2;transform:scaleX(1.0267);left:888.0px;top:500.3px;">504</div></div><div class="bx" style="left:1220px;top:1029px;width:2px;height:844.5px;background:#47484b"></div><div class="bx" style="left:1285px;top:1028px;width:2062px;height:846px;overflow:hidden" id="mapwrap"><div class="bx" style="left:0;top:0;width:2062px;height:900px;border:2px solid #333437;border-radius:3px 16px 0 0"></div><svg width="2062" height="846" viewBox="0 0 2062 846" style="left:0;top:0;overflow:hidden"><path d="M55.1 210.0L65.7 204.5L79.1 205.4L90.3 203.5L84.7 197.9L76.9 191.3L62.3 184.1L65.7 178.8L80.8 174.8L89.2 164.9L105.9 159.3L119.3 154.2L131.1 158.8L145.0 159.3L156.2 163.4L167.4 164.4L184.2 167.9L195.3 166.9L206.5 171.4L217.7 172.4L228.9 178.3L237.3 174.3L251.2 172.9L262.4 168.9L270.8 166.9L282.0 163.9L290.3 172.9L297.6 166.4L315.5 169.9L335.1 177.8L351.8 185.5L360.2 189.9L379.8 188.0L389.3 194.1L394.8 188.4L402.1 180.7L424.5 189.4L444.0 189.4L449.6 182.2L458.0 185.5L460.8 194.1L469.2 183.6L459.1 171.9L456.3 161.8L463.6 148.5L474.8 155.7L480.4 167.9L485.9 173.8L494.3 178.8L502.7 187.5L508.3 193.2L513.9 187.5L516.7 177.8L522.3 169.9L536.2 170.9L540.2 176.8L536.2 184.6L539.0 192.2L527.9 203.5L516.7 201.7L511.1 203.5L513.9 210.9L505.5 215.5L499.9 224.5L487.6 229.8L480.4 236.8L472.0 246.3L465.3 256.5L464.7 267.3L474.8 269.7L477.6 281.9L488.7 281.9L502.7 287.5L519.5 296.1L534.6 297.7L535.1 310.8L541.8 322.1L544.6 327.3L551.3 327.3L554.1 318.3L553.0 306.9L550.2 301.6L561.4 294.5L565.3 285.9L564.2 275.4L556.9 268.9L561.4 259.0L559.7 250.6L557.5 239.4L572.6 239.4L583.7 239.4L592.1 244.6L594.9 248.9L603.3 250.6L606.1 259.0L605.5 267.3L611.7 273.0L622.9 269.7L628.5 262.3L634.0 256.0L639.6 267.3L648.0 277.0L650.8 287.5L658.1 295.3L667.6 300.8L673.2 305.4L678.7 312.3L682.7 319.8L678.7 325.8L667.6 328.0L659.2 334.7L648.0 334.7L634.0 334.7L622.9 335.4L617.3 341.2L611.7 344.1L604.4 350.6L598.8 356.9L603.3 356.2L611.7 348.4L622.9 343.4L632.4 343.4L635.2 345.5L631.2 350.6L624.0 351.3L631.2 354.8L632.4 359.8L636.8 364.0L642.4 366.8L649.1 366.8L656.4 358.4L660.3 365.4L653.6 370.2L642.4 374.4L634.0 379.9L626.8 382.6L624.5 377.8L631.2 372.3L635.2 369.6L628.5 370.9L620.1 372.3L620.1 374.4L611.7 377.1L603.3 380.6L599.4 386.0L598.8 389.4L603.3 394.1L599.9 395.4L594.9 396.8L589.3 398.1L582.6 400.1L592.1 399.4L583.7 402.1L580.9 402.7L580.4 408.0L575.9 412.9L573.1 410.0L574.8 415.2L572.0 421.7L569.8 425.6L567.5 415.9L566.4 424.3L570.9 430.7L572.6 436.7L567.0 440.2L559.2 445.3L551.9 449.6L544.6 455.2L540.7 460.8L539.6 467.6L542.4 475.5L544.6 479.2L546.9 487.6L546.9 494.8L544.6 498.7L540.7 498.4L537.4 493.6L535.1 488.8L531.8 482.8L532.3 476.7L527.9 470.6L523.9 469.1L517.8 471.6L512.2 467.3L504.9 467.9L497.7 467.3L494.3 468.5L496.0 474.6L490.4 474.9L484.3 473.7L477.6 472.2L470.3 471.2L464.7 473.7L459.1 477.3L452.4 482.2L450.2 487.6L451.3 494.2L448.5 502.5L447.9 514.3L450.7 523.1L455.2 531.9L459.1 535.9L466.4 539.4L474.8 538.2L481.5 537.1L487.1 533.0L489.3 524.3L491.5 522.2L499.9 520.2L508.3 520.2L509.4 524.3L505.5 531.3L503.8 538.8L501.0 543.4L499.4 552.0L505.5 553.2L513.9 552.6L522.3 553.2L529.0 557.8L527.3 566.3L527.9 574.8L526.7 580.5L530.7 586.1L535.1 590.6L541.8 592.9L548.0 590.1L554.1 589.0L561.9 593.5L565.3 597.4L568.1 591.8L572.0 587.3L572.6 582.7L576.5 579.9L583.7 578.8L591.0 574.8L594.1 572.3L596.6 576.0L592.7 579.4L594.4 581.6L597.7 580.5L602.2 577.7L604.4 573.7L605.0 577.7L612.2 579.4L613.4 582.7L624.5 582.7L631.2 585.6L635.7 583.3L648.6 582.2L644.7 585.0L648.0 586.7L654.7 590.1L659.2 594.6L664.8 597.4L669.2 603.6L676.0 608.6L687.1 608.9L692.7 609.8L701.1 614.2L706.1 617.6L711.2 629.9L715.1 636.6L712.3 642.2L724.0 643.9L726.2 646.1L731.8 645.6L740.2 649.5L746.9 655.6L754.2 655.6L762.6 658.4L771.0 658.1L779.3 662.9L786.6 668.5L797.2 671.3L798.9 678.6L800.0 684.2L798.9 691.5L795.0 696.6L787.7 703.9L782.1 712.4L779.3 715.3L776.5 723.8L776.5 735.2L775.4 742.7L772.6 752.5L769.3 758.4L765.4 766.0L760.3 772.4L753.1 773.0L744.7 774.8L735.8 778.9L727.4 784.8L722.9 790.8L722.9 799.8L720.7 806.5L715.1 813.8L709.5 822.4L703.3 828.5L696.1 837.9L692.7 842.9L687.1 845.5L680.4 845.5L673.2 842.3L668.1 839.8L667.6 843.6L674.3 849.3L676.0 855.6L676.0 891.7L582.1 891.7L583.7 858.8L587.7 849.3L593.8 833.5L594.9 821.1L595.5 814.4L597.7 799.8L600.5 787.2L601.1 776.0L602.2 761.3L601.6 746.2L596.0 741.6L588.2 736.4L574.8 728.9L568.1 720.4L563.6 710.1L558.6 700.0L555.2 692.6L550.2 685.3L548.0 680.8L541.3 675.8L540.2 668.5L544.6 661.8L548.0 656.7L542.4 654.5L543.5 647.8L546.9 642.2L547.4 637.7L553.6 635.5L555.8 629.9L561.4 627.7L563.1 621.0L561.4 611.4L561.9 605.3L559.2 601.9L556.4 596.3L553.0 592.3L550.2 592.3L547.4 595.7L545.2 600.8L542.4 601.9L540.7 597.4L536.2 596.3L531.2 596.3L527.3 594.6L521.2 588.4L518.9 588.4L515.0 583.9L515.6 579.9L510.5 574.8L506.1 569.7L504.4 567.4L498.2 568.0L491.5 565.7L483.7 564.0L478.7 560.0L469.7 552.0L464.1 550.9L455.2 553.7L446.8 551.5L436.2 547.4L425.6 541.7L416.1 538.2L411.1 534.2L404.9 528.9L405.5 523.1L403.8 514.3L399.3 509.6L392.1 502.5L385.3 496.0L383.1 489.4L376.4 482.2L368.6 476.1L364.1 468.2L361.9 462.0L357.4 459.6L352.9 458.3L352.9 463.3L356.3 469.4L361.9 476.7L366.3 484.6L371.9 492.4L375.8 500.7L379.8 504.9L382.6 510.2L379.8 512.0L375.3 506.7L368.0 501.9L366.9 493.6L360.2 488.8L351.8 482.8L356.3 478.5L352.4 473.1L346.8 466.4L342.3 459.0L340.1 454.0L339.0 449.6L332.8 445.9L331.7 444.3L326.1 442.1L321.1 441.5L320.0 436.4L313.8 429.4L312.7 425.9L309.9 421.7L307.1 417.8L302.6 410.6L299.3 403.4L301.0 396.1L299.3 387.4L301.0 375.8L301.5 364.0L301.0 359.1L297.6 348.8L306.0 350.2L309.9 355.5L310.5 349.1L308.2 344.1L306.0 341.9L298.7 336.8L293.1 333.2L284.8 329.5L280.3 322.1L274.7 314.6L268.0 306.9L265.8 301.6L262.4 295.3L256.8 289.8L248.4 279.5L242.8 273.0L237.3 265.6L231.7 272.2L224.4 269.7L214.9 262.3L203.7 259.8L189.7 259.0L178.6 253.9L167.4 253.9L164.6 259.8L156.2 263.1L146.2 265.6L147.8 254.8L156.2 248.9L147.8 250.6L142.2 259.0L136.7 267.3L131.1 273.0L119.9 281.9L108.7 289.8L97.5 295.3L86.4 299.2L73.5 302.3L83.6 296.1L94.7 291.4L103.1 285.1L111.5 277.0L115.4 270.5L117.1 268.9L108.7 269.7L97.5 268.9L89.2 270.5L90.3 263.1L83.6 259.8L75.2 256.5L71.3 250.6L66.8 245.4L72.4 237.7L75.2 232.4L83.6 231.6L93.6 228.0L95.9 219.1L86.4 220.0L75.2 220.9L64.0 217.3ZM586.5 77.8L611.7 65.6L631.2 52.9L620.1 47.8L648.0 37.3L687.1 25.1L715.1 23.8L743.0 16.9L782.1 9.8L807.8 7.0L843.6 11.3L860.4 21.0L877.1 29.2L871.6 38.6L905.1 31.9L930.2 37.3L916.3 47.8L899.5 55.5L885.5 65.6L888.3 76.6L879.9 89.8L891.1 98.0L879.9 109.5L885.5 120.6L874.3 128.3L868.8 136.9L857.6 142.2L871.6 150.6L868.8 160.8L852.0 161.8L863.2 169.9L846.4 181.7L826.8 186.5L812.9 192.2L804.5 202.6L793.3 208.2L779.3 210.0L771.0 215.5L766.5 226.2L758.1 237.7L755.3 250.6L752.5 257.3L745.8 259.8L737.4 253.1L723.5 248.9L717.3 239.4L709.5 228.9L703.9 220.0L701.1 210.9L694.4 197.0L697.2 184.6L709.5 178.8L709.5 170.9L698.3 174.8L688.2 169.9L689.9 160.8L703.9 160.8L689.9 152.7L684.3 142.2L678.7 128.3L673.2 117.3L662.0 106.1L642.4 101.5L620.1 103.8L606.1 99.2L597.7 92.2L608.9 86.3L594.9 82.7ZM871.6 224.5L867.6 226.2L879.9 228.9L891.1 229.8L905.1 224.5L913.5 220.9L918.5 215.5L917.9 210.0L911.8 204.5L905.1 201.7L893.9 205.4L881.1 209.1L875.5 210.9L868.8 202.6L864.3 203.5L858.1 210.9L870.4 211.8L860.4 217.3L870.4 220.9ZM631.2 244.6L622.9 242.0L608.9 238.5L597.7 234.2L589.3 227.1L578.2 220.9L567.0 222.2L556.9 219.1L561.4 211.8L579.8 212.7L583.7 204.5L587.7 195.1L580.9 185.5L572.6 178.8L558.6 167.9L547.4 169.9L523.4 167.9L513.9 166.9L502.7 163.9L492.6 154.7L494.3 147.5L491.5 136.9L497.1 128.3L513.9 129.4L519.5 139.0L522.3 130.5L539.0 130.5L544.6 129.4L558.6 134.8L564.2 140.1L578.2 147.5L594.9 154.7L611.7 163.9L620.1 175.8L634.0 186.5L648.0 195.1L651.9 200.7L645.2 209.1L634.0 208.2L627.3 201.7L618.4 203.5L625.7 215.5L632.4 224.5L632.9 234.2L622.9 230.7L612.8 226.2L620.1 235.1ZM337.8 161.8L351.8 174.8L360.2 181.7L385.3 181.7L407.7 178.8L424.5 179.7L430.1 171.9L418.9 163.9L407.7 157.8L410.5 147.5L404.9 138.0L393.7 133.7L388.1 142.2L377.0 138.0L357.4 133.7L337.8 139.0L329.5 150.6L343.4 153.7L333.4 157.8ZM293.1 145.4L304.3 155.7L315.5 153.7L326.7 147.5L337.8 133.7L349.0 126.1L335.1 122.8L315.5 120.6L298.7 122.8L301.5 130.5L295.9 138.0ZM491.5 99.2L513.9 100.3L541.8 101.5L558.6 96.8L564.2 82.7L572.6 74.2L575.4 64.3L597.7 58.0L614.5 47.8L634.0 37.3L648.0 23.8L625.7 16.9L592.1 14.1L558.6 15.5L525.1 22.4L502.7 29.2L483.1 35.9L497.1 45.2L513.9 51.6L508.3 61.8L519.5 68.0L505.5 77.8L499.9 88.6ZM460.8 56.7L477.6 65.6L491.5 76.6L505.5 71.7L508.3 59.3L499.9 49.0L485.9 39.9L466.4 39.9L458.0 47.8ZM455.2 98.0L477.6 118.4L502.7 121.7L530.7 120.6L547.4 118.4L548.5 109.5L527.9 106.1L502.7 108.3L494.3 98.0L474.8 96.8L463.6 92.2ZM340.6 112.8L365.8 120.6L388.1 116.2L402.1 115.1L404.9 106.1L388.1 100.3L377.0 103.8L360.2 100.3L340.6 101.5ZM410.5 98.0L432.9 115.1L449.6 110.6L444.0 98.0L427.3 94.5ZM307.1 101.5L326.7 106.1L346.2 95.7L332.3 87.4L309.9 93.3ZM421.7 152.7L438.4 154.7L455.2 142.2L449.6 128.3L432.9 126.1L421.7 138.0ZM459.7 146.4L472.0 148.5L490.4 139.0L489.9 127.2L463.6 125.0L458.0 135.9ZM508.3 211.8L519.5 208.2L525.1 212.7L539.0 220.0L546.3 226.2L530.7 228.0L516.7 231.6L506.6 226.2L513.9 220.0ZM438.4 176.8L449.6 182.6L460.8 179.7L458.0 172.9L449.6 167.9ZM455.2 112.8L472.0 118.4L474.8 110.6L460.8 107.2ZM407.7 75.4L430.1 83.9L452.4 80.3L441.2 68.0L416.1 64.3ZM663.1 353.4L673.2 354.8L684.3 359.8L692.7 360.5L698.3 361.2L700.0 354.1L695.5 347.7L693.8 341.2L687.1 340.5L681.5 335.4L683.8 325.8L677.1 327.3L673.2 334.7L668.7 344.1L663.1 349.1ZM277.5 331.0L287.5 338.3L295.9 345.5L304.3 349.1L303.8 344.1L295.9 336.8L284.8 331.0ZM251.2 306.2L258.5 307.7L261.3 319.8L254.0 313.0ZM131.1 280.3L139.5 283.5L143.9 277.9L139.5 273.8ZM634.0 337.6L648.0 343.4L649.7 341.2L639.6 337.2ZM635.2 359.1L645.2 365.4L648.0 361.9L639.6 360.5ZM520.0 517.9L527.9 516.1L533.4 513.2L544.6 516.7L555.8 520.2L561.4 524.9L563.1 529.5L572.6 529.5L579.8 527.8L572.6 524.3L564.2 519.6L553.0 514.3L544.6 510.8L533.4 510.2L525.1 512.6ZM578.7 537.1L583.7 539.4L593.8 541.7L603.3 538.8L612.2 538.8L610.0 534.7L603.9 530.7L593.8 529.5L587.7 529.5L584.3 530.1L589.3 534.7ZM556.9 538.2L561.4 541.7L568.1 541.1L564.7 537.9ZM618.9 538.2L619.5 540.5L627.3 540.5L627.3 537.9ZM648.6 582.2L649.1 585.6L653.6 585.6L653.9 581.6ZM122.7 527.8L123.2 534.2L128.3 532.4L126.6 528.9ZM118.8 523.4L120.5 525.5L122.7 524.6L121.0 523.1ZM110.1 519.9L111.5 521.4L113.2 521.1L111.8 519.0ZM101.7 516.7L103.1 517.9L104.2 516.7L103.1 515.8ZM59.0 257.3L66.8 260.6L69.0 256.5L62.3 255.6ZM34.9 228.0L44.4 232.4L51.2 230.7L41.7 227.1ZM1458.3 126.1L1444.4 130.5L1441.6 142.2L1430.4 145.4L1427.6 141.2L1415.3 139.0L1412.5 147.5L1402.5 153.7L1406.9 167.9L1405.3 177.8L1409.7 185.5L1402.5 191.3L1394.1 201.7L1380.1 200.7L1393.0 197.0L1398.6 185.5L1401.3 175.8L1399.7 157.8L1398.6 141.2L1385.7 135.9L1376.2 147.5L1367.8 159.8L1368.9 171.9L1375.6 181.7L1364.5 177.8L1355.0 174.8L1335.4 169.9L1330.9 175.8L1334.3 180.7L1324.2 183.6L1313.0 181.7L1301.9 182.6L1296.3 185.5L1287.9 182.6L1276.7 186.5L1265.5 190.3L1254.4 187.5L1241.5 182.6L1236.5 181.7L1239.3 194.1L1241.5 203.5L1232.0 202.1L1220.8 207.2L1216.9 215.5L1220.8 219.5L1206.9 223.6L1204.1 226.2L1191.8 221.3L1187.9 211.8L1178.9 201.7L1176.7 196.0L1190.1 200.7L1206.9 205.4L1219.7 201.7L1224.7 195.1L1218.0 189.4L1201.3 180.7L1184.5 174.8L1173.3 169.9L1162.2 169.9L1167.7 163.9L1156.6 159.8L1148.2 156.8L1138.1 156.3L1125.8 161.8L1114.7 166.9L1103.5 170.9L1095.1 175.8L1083.9 181.7L1078.3 189.4L1072.7 198.9L1066.0 206.3L1061.6 215.5L1054.9 221.8L1049.3 228.0L1042.0 231.6L1033.6 235.9L1024.1 242.0L1022.4 250.6L1022.4 259.0L1025.2 267.3L1028.0 272.2L1033.6 275.4L1040.3 273.8L1047.6 268.1L1053.2 264.8L1053.7 259.8L1056.0 267.3L1057.7 273.0L1061.6 281.1L1065.5 289.8L1067.2 296.1L1074.4 295.3L1075.5 291.4L1083.9 289.0L1086.7 279.5L1089.5 270.5L1097.9 263.1L1095.1 254.8L1090.6 246.3L1092.3 237.7L1100.7 230.7L1111.9 220.0L1117.4 210.9L1128.6 208.2L1135.9 215.5L1131.4 222.7L1117.4 233.3L1113.5 242.0L1114.7 250.6L1120.2 259.0L1134.2 257.3L1148.2 254.8L1159.4 259.0L1163.3 259.8L1151.0 263.1L1139.8 262.3L1125.8 264.8L1125.8 271.4L1131.4 273.0L1130.3 281.1L1127.5 283.5L1120.8 277.9L1114.7 280.3L1111.9 287.5L1112.4 296.9L1106.3 300.0L1103.5 303.9L1098.4 303.1L1095.1 300.8L1086.7 303.1L1074.4 306.9L1069.9 303.1L1064.4 303.9L1056.0 306.9L1050.4 303.1L1047.6 299.2L1050.4 294.5L1052.1 287.5L1053.2 278.7L1047.6 281.9L1040.3 285.1L1039.8 294.5L1042.6 300.0L1043.1 306.9L1039.2 310.0L1033.6 311.5L1025.2 312.3L1021.3 315.3L1017.4 322.1L1013.5 326.5L1008.5 328.8L1003.4 330.2L1003.4 335.4L995.6 339.0L988.4 341.2L985.6 339.4L986.1 346.6L977.7 345.5L968.2 348.4L970.5 352.7L978.9 355.5L982.8 358.4L987.8 364.0L987.8 374.4L986.1 382.6L977.7 383.3L966.6 382.6L955.4 381.9L949.8 380.9L943.1 385.3L945.3 392.1L945.9 399.4L944.2 408.7L941.4 414.2L945.3 416.5L944.8 425.6L953.1 424.3L958.7 427.5L963.2 432.0L969.9 427.5L982.2 427.2L990.6 421.7L993.9 414.6L992.8 409.3L999.0 401.4L1006.8 396.8L1012.4 392.7L1011.8 386.0L1016.9 382.6L1024.1 384.0L1031.4 385.3L1035.9 381.2L1043.7 376.5L1051.5 379.9L1053.2 386.7L1060.4 392.7L1063.2 394.8L1067.2 398.1L1073.9 400.7L1078.3 404.7L1082.2 406.0L1083.9 412.6L1082.2 419.1L1086.7 417.2L1090.1 412.6L1087.3 408.0L1089.5 402.7L1095.1 406.7L1097.9 405.4L1095.1 401.4L1085.0 393.4L1078.3 392.7L1072.7 388.7L1069.9 381.9L1063.8 377.8L1063.2 370.2L1070.5 367.5L1072.2 373.7L1075.5 370.2L1079.4 377.8L1086.7 382.6L1092.3 386.7L1097.9 390.1L1102.9 394.1L1102.9 403.4L1106.3 408.0L1110.7 413.3L1113.0 417.2L1113.0 420.4L1115.8 426.8L1120.2 428.8L1123.6 428.8L1124.2 423.6L1123.0 419.8L1128.6 421.0L1128.6 417.2L1122.5 410.6L1121.4 402.7L1125.8 404.7L1128.6 405.4L1130.9 400.1L1139.8 400.7L1140.9 405.4L1140.4 409.3L1144.3 414.6L1141.5 417.2L1146.5 422.3L1147.1 425.6L1152.1 427.5L1157.7 430.0L1165.0 430.0L1166.1 426.5L1173.3 430.0L1176.1 431.3L1184.5 429.4L1188.4 426.8L1194.0 428.1L1196.8 428.1L1195.1 432.6L1195.1 438.3L1192.9 445.3L1190.1 452.1L1188.4 457.7L1186.2 461.4L1181.7 462.7L1175.0 461.4L1167.7 460.2L1162.2 461.4L1156.6 463.9L1145.4 461.4L1134.2 459.0L1123.0 453.4L1115.2 451.5L1106.3 457.1L1105.2 464.5L1100.7 467.6L1089.5 463.3L1081.1 460.2L1079.4 455.2L1068.3 451.5L1058.8 450.3L1054.9 446.5L1050.9 445.3L1054.9 440.8L1056.0 435.1L1054.3 428.8L1056.0 425.6L1049.8 423.6L1042.0 426.2L1033.6 425.6L1022.4 426.8L1011.3 426.8L1000.1 429.4L988.9 434.5L983.3 437.7L977.7 436.4L969.4 437.0L964.9 432.6L961.5 433.2L958.2 441.5L952.0 447.1L944.2 454.0L939.7 460.2L940.8 467.0L937.5 473.7L930.2 479.8L922.4 482.2L913.5 492.4L910.7 500.7L905.1 507.3L899.5 520.2L899.2 524.3L903.4 531.9L905.1 540.5L902.3 549.2L897.3 559.5L900.6 566.3L901.2 572.6L907.9 577.7L911.8 581.6L917.9 589.0L920.7 594.6L927.4 601.3L933.0 605.3L941.4 612.0L951.5 617.6L961.0 615.4L972.1 613.1L982.8 615.6L993.4 611.2L1001.2 608.1L1008.5 606.7L1013.5 606.4L1019.6 606.9L1024.1 611.4L1028.0 618.2L1033.6 617.6L1040.9 616.5L1044.2 617.0L1048.7 620.4L1049.3 628.2L1047.0 636.6L1046.5 640.0L1043.7 646.1L1048.2 655.1L1056.0 664.0L1060.4 669.0L1062.7 675.2L1067.2 684.2L1068.3 691.5L1071.6 702.2L1069.4 711.8L1064.4 718.1L1062.1 727.2L1060.4 738.1L1060.4 743.9L1067.2 755.5L1075.0 770.1L1075.5 778.9L1078.9 794.4L1086.2 806.5L1090.1 815.0L1095.1 827.3L1096.8 833.5L1097.3 839.1L1097.9 842.0L1102.4 843.6L1106.3 844.8L1117.4 840.4L1125.8 839.8L1137.6 839.8L1145.4 836.6L1151.0 832.9L1159.4 824.2L1167.7 814.4L1175.6 805.9L1178.4 790.8L1181.7 786.0L1192.3 778.9L1192.9 767.1L1190.1 758.4L1189.0 754.3L1198.5 746.8L1206.9 739.8L1218.0 732.4L1222.0 725.5L1221.4 715.3L1220.8 703.9L1218.0 698.3L1214.1 689.8L1214.1 680.3L1211.3 675.8L1212.5 670.2L1216.4 664.6L1220.3 656.2L1226.4 651.7L1232.0 644.4L1240.4 636.6L1247.7 631.0L1257.2 619.8L1265.5 611.4L1271.1 600.2L1276.7 589.0L1280.1 583.9L1281.2 576.0L1273.9 577.1L1265.5 578.8L1257.2 579.9L1246.0 583.3L1237.6 578.8L1235.9 577.1L1236.5 572.0L1232.0 567.4L1224.7 560.0L1218.0 556.0L1214.7 554.3L1210.2 540.5L1203.0 531.9L1201.3 520.2L1194.0 508.4L1191.2 502.5L1184.5 490.6L1182.3 482.8L1176.7 470.0L1177.2 472.5L1181.7 480.4L1185.6 483.1L1187.9 476.7L1189.8 472.5L1189.5 481.6L1194.0 485.5L1198.2 492.1L1207.1 504.9L1213.3 520.2L1219.7 528.1L1232.3 546.9L1234.5 558.9L1236.2 567.4L1237.0 571.1L1246.0 570.3L1268.9 560.6L1286.2 552.0L1296.8 546.3L1304.7 541.7L1310.3 537.6L1317.5 534.7L1317.0 527.2L1322.5 526.0L1328.7 514.3L1322.0 507.9L1313.0 505.5L1311.4 503.4L1309.7 499.6L1309.7 491.8L1307.5 494.8L1303.5 497.8L1298.5 502.5L1288.5 504.3L1282.9 504.3L1280.6 501.9L1282.9 497.8L1280.6 493.0L1278.4 496.6L1278.4 500.7L1275.0 496.0L1274.5 491.2L1271.1 485.8L1267.2 481.6L1262.8 473.7L1265.5 469.4L1271.1 468.2L1275.6 470.6L1278.4 476.1L1282.3 482.2L1288.5 485.2L1296.3 489.4L1304.7 488.8L1309.1 486.7L1313.0 488.8L1314.7 494.8L1317.5 495.7L1324.2 497.2L1333.2 497.8L1342.7 498.7L1355.0 497.8L1366.1 497.2L1368.9 500.7L1371.7 506.1L1377.3 510.2L1380.1 514.9L1385.7 523.1L1391.3 524.9L1397.4 522.0L1399.7 516.1L1401.3 522.5L1401.6 534.7L1404.1 546.3L1406.9 554.9L1412.8 569.7L1418.1 579.1L1420.6 586.4L1424.5 594.6L1427.9 596.9L1431.5 592.3L1436.0 590.1L1440.5 584.4L1443.3 568.6L1458.3 546.3ZM965.4 336.8L974.9 334.7L986.1 331.7L997.3 331.0L1002.3 328.0L999.0 325.8L1004.0 316.8L996.2 314.6L994.5 310.0L988.9 302.3L985.6 295.3L980.5 291.4L983.3 278.7L974.9 277.9L977.7 270.5L966.6 270.5L962.1 278.7L963.2 287.5L966.6 296.9L974.9 300.0L977.7 307.7L976.6 312.3L969.4 312.3L971.6 319.8L965.4 322.8L976.1 326.5L970.5 328.0ZM938.6 325.1L948.7 323.6L959.3 320.6L961.0 311.5L963.8 303.9L959.3 297.7L952.6 296.9L947.0 303.1L938.6 305.4L941.4 313.0L939.7 319.8ZM1058.8 60.5L1061.6 74.2L1072.7 85.1L1086.7 95.7L1097.9 86.3L1114.7 76.6L1100.7 68.0L1111.9 56.7L1095.1 54.2L1078.3 58.0ZM1106.3 52.9L1120.2 61.8L1142.6 61.8L1145.4 54.2L1125.8 49.0ZM1282.3 157.8L1290.7 161.8L1304.7 160.8L1315.8 160.8L1307.5 149.5L1304.7 139.0L1310.3 130.5L1318.6 120.6L1335.4 110.6L1357.8 101.5L1377.3 93.3L1363.3 92.2L1341.0 99.2L1318.6 106.1L1304.7 116.2L1296.3 128.3L1287.9 142.2ZM1265.5 173.8L1271.1 179.7L1276.7 175.8L1271.1 171.9ZM1270.0 709.6L1275.0 718.1L1276.7 729.5L1272.3 738.1L1268.3 752.5L1263.9 767.1L1258.3 784.2L1248.8 787.8L1240.4 784.8L1236.5 770.1L1241.5 755.5L1240.4 741.0L1246.0 732.4L1257.2 726.6L1262.8 718.1ZM1064.4 419.1L1069.9 424.3L1078.9 427.5L1081.1 417.8L1072.7 419.1ZM1040.9 400.1L1041.4 411.3L1045.4 411.9L1048.7 406.0L1046.5 398.1ZM1042.6 388.7L1043.1 395.4L1046.5 396.1L1047.6 386.7ZM1125.8 435.1L1131.4 438.3L1140.9 437.7L1137.0 435.8ZM1175.0 438.3L1181.7 440.8L1187.9 434.5L1178.9 436.4ZM1056.0 296.1L1060.4 300.0L1064.9 294.5L1061.6 290.6ZM1049.3 296.1L1053.2 299.2L1054.9 295.3ZM1096.2 282.7L1100.1 279.5L1100.7 276.2L1097.3 277.9ZM1086.2 289.0L1090.1 281.1L1087.8 285.1ZM1116.9 273.0L1123.0 273.0L1121.9 269.7L1117.4 270.5ZM1292.9 571.4L1299.1 573.1L1298.5 570.9ZM1007.9 408.7L1011.8 410.6L1013.5 407.4ZM953.7 241.1L958.2 243.7L957.6 239.4ZM1124.7 413.3L1129.7 417.8L1132.0 419.1L1127.5 414.6ZM1213.6 674.6L1215.2 678.0L1214.7 675.2ZM1042.0 621.5L1044.2 623.8L1044.2 621.2ZM2000.4 178.8L2017.2 187.5L2031.2 194.1L2045.1 198.9L2058.0 205.4L2053.5 210.0L2045.1 210.9L2042.4 218.2L2036.8 221.8L2025.6 217.3L2014.4 211.8L2000.4 215.5L1997.6 197.0ZM1992.1 156.8L2008.8 159.8L2014.4 154.7L2000.4 151.6ZM1519.8 55.5L1542.2 55.5L1550.6 47.8L1533.8 39.2L1517.0 46.5ZM52.8 312.3L61.2 311.5L65.1 307.7L58.4 308.5ZM42.8 316.8L48.9 316.1L46.7 314.6ZM19.3 321.3L26.6 321.3L22.1 319.1ZM4.2 324.3L9.8 323.6L6.4 322.1ZM66.8 306.9L72.4 305.4L74.6 301.6L68.5 303.1ZM33.3 319.8L37.7 319.1L35.5 317.6ZM-4.7 325.1L-0.3 325.1L-2.5 322.8ZM1251.6 49.0L1268.3 54.2L1282.3 47.8L1265.5 43.8ZM1290.7 51.6L1313.0 55.5L1329.8 50.3L1341.0 43.8L1318.6 37.3L1301.9 42.5ZM1343.8 35.9L1357.8 42.5L1349.4 31.9ZM900.1 479.8L903.4 481.0L904.0 478.2ZM906.2 481.6L908.4 482.8L908.4 480.7ZM914.0 479.8L916.8 480.4L916.8 477.3ZM917.4 476.1L919.1 475.5L919.1 473.7ZM1139.2 411.3L1142.6 412.6L1142.0 410.3ZM1149.3 430.7L1152.1 432.0L1152.1 429.4Z" fill="#252c39" stroke="#252c39" stroke-width="0.6" stroke-linejoin="round"/><path d="M1151.0 393.4L1149.3 388.0L1151.0 383.3L1154.3 379.2L1160.5 372.3L1166.6 363.3L1173.3 361.9L1178.9 365.4L1176.1 369.6L1178.9 370.2L1181.7 375.8L1187.3 376.5L1192.3 372.3L1198.5 370.2L1195.7 369.2L1190.1 367.5L1190.1 364.0L1191.8 361.9L1201.3 359.1L1209.7 357.7L1213.6 356.9L1208.5 361.9L1205.7 367.5L1201.3 370.9L1204.1 374.4L1212.5 379.2L1216.4 382.6L1223.6 386.0L1227.0 395.4L1218.0 399.4L1206.9 399.4L1198.5 397.4L1190.1 392.7L1178.9 392.7L1170.5 397.4L1162.2 398.8L1157.1 398.1L1156.6 399.8L1161.6 401.4L1151.0 403.4L1145.4 403.4L1143.7 402.7L1148.2 399.4L1154.3 399.1ZM1268.3 361.9L1260.0 368.9L1257.2 375.8L1260.0 386.0L1265.5 394.1L1271.1 402.7L1268.3 411.3L1268.3 419.1L1273.9 424.3L1285.1 426.8L1296.3 425.6L1295.2 415.9L1290.7 409.3L1289.6 402.7L1293.5 400.7L1299.1 399.4L1290.7 394.1L1287.9 389.4L1282.3 384.0L1279.5 375.8L1287.9 369.6L1290.7 361.9L1282.3 358.4ZM479.8 360.5L488.7 361.2L499.9 359.8L508.3 361.9L519.5 361.9L522.3 358.4L516.7 352.0L511.1 346.3L501.0 344.8L494.3 351.3L487.1 356.2ZM503.3 394.8L508.3 395.4L512.2 389.4L511.1 379.2L516.7 372.3L519.5 366.8L511.1 366.8L505.5 372.3L502.7 375.8L504.9 382.6L503.3 389.4ZM522.3 366.8L527.9 366.1L539.0 365.4L547.4 369.6L547.4 375.1L540.2 375.1L537.9 383.3L534.0 386.0L532.3 379.9L526.2 381.2L529.0 373.7L527.9 370.2ZM528.4 394.1L533.4 396.8L541.8 394.1L553.0 388.0L553.0 386.7L544.6 388.7L536.2 390.7L530.7 392.1ZM548.5 384.0L555.8 384.0L567.0 382.6L568.7 377.8L561.4 379.2L553.0 380.6ZM1172.2 645.0L1176.1 641.1L1183.4 640.5L1185.6 645.0L1183.4 650.6L1180.0 656.7L1173.3 656.2L1171.7 650.6ZM1158.2 661.2L1160.5 667.4L1161.0 675.8L1166.6 687.0L1167.7 690.9L1164.4 688.7L1158.2 675.8L1157.1 667.4ZM1184.5 696.0L1187.9 703.9L1189.0 718.1L1191.2 723.2L1187.3 720.9L1185.6 709.6L1184.0 701.1Z" fill="#0d1323"/><path d="M206.5 171.4L206.5 256.5L217.7 259.0L226.1 268.1L237.3 260.6L248.4 272.2L257.9 286.7L268.0 292.2L265.8 301.6M306.0 344.1L462.8 344.1L464.7 341.9L465.8 346.3L480.4 349.1L494.3 351.3L500.5 349.1L520.6 359.1L524.5 361.9L527.9 366.8L533.4 370.2L534.0 386.0L530.1 392.1L533.4 394.8L553.0 387.4L552.4 383.3L565.3 381.9L568.1 377.8L575.4 372.3L594.9 372.3L598.8 369.6L603.3 360.5L607.8 355.2L613.4 355.9L615.6 357.7L615.6 367.5L620.1 373.0M340.1 454.0L353.5 452.8L374.2 461.4L389.8 461.4L389.8 458.3L399.3 458.6L408.3 465.7L410.5 471.9L418.3 475.5L421.7 470.9L427.8 470.6L434.0 479.8L438.4 484.6L440.7 491.2L451.3 494.2M479.2 560.6L479.2 556.6L482.0 551.5L489.3 551.5L483.7 544.9L485.9 541.7L496.3 541.7L496.3 552.6L501.6 553.7M496.3 541.7L501.0 537.6M479.2 560.6L491.0 564.9M491.0 564.9L495.2 561.2L496.3 557.8L501.6 553.7M495.2 561.2L503.8 566.9M504.4 569.1L510.0 564.6L519.5 560.0L529.5 558.0M515.6 579.9L521.2 580.5L527.0 581.0M531.2 596.8L531.2 591.2L532.9 588.7M561.9 593.5L559.2 601.9M596.0 576.0L589.3 579.9L586.5 590.6L589.9 595.1L592.1 603.0L602.7 603.0L606.7 608.1L617.3 607.5L615.6 617.0L618.4 623.2L615.6 626.5L618.9 629.3L620.6 635.5M620.6 635.5L619.5 632.7L604.4 632.7L604.4 636.1L607.8 636.6L606.7 648.3L603.9 665.7M603.9 665.7L599.4 663.4L603.3 657.3L587.1 655.6L582.6 649.5L573.7 642.8M573.7 642.8L568.1 640.0L561.9 640.0L554.1 634.4M573.7 642.8L574.2 647.2L572.0 650.6L566.4 656.7L559.7 659.0L556.4 661.2L554.7 667.4L549.7 667.4L545.7 661.2M603.9 665.7L598.8 665.7L587.1 671.8L586.5 679.1L582.6 680.8L580.9 684.2L586.5 692.6L591.0 698.3L599.9 695.4L599.9 703.9L605.5 703.6M605.5 703.6L610.6 712.4L608.9 718.7L609.4 723.2L606.7 725.5L607.8 728.4L603.9 728.4L609.4 735.8L606.1 741.0M606.1 741.0L601.1 745.9M605.5 703.6L612.8 703.9L622.3 697.7L629.6 697.1L629.0 707.9L635.2 712.4L642.4 713.5L649.1 718.1L656.4 719.8L658.1 734.1L668.7 734.1L668.1 739.8L673.2 745.0L671.5 749.7L669.8 754.3M669.8 754.3L664.2 751.4L649.7 753.1L646.3 758.4L644.7 768.3M644.7 768.3L636.8 767.1L635.2 771.8L630.1 767.7L624.0 766.0L618.9 771.8M618.9 771.8L615.0 771.8L613.4 764.2L610.6 757.8L612.2 752.0L608.9 749.7L608.9 743.9L606.1 741.0M618.9 771.8L620.1 773.0L618.4 778.9L612.2 781.9L611.7 792.6L612.8 796.2L608.3 801.6L605.0 805.9L603.3 810.7L603.3 817.4L600.5 824.2L602.7 833.5L604.4 841.0L600.5 848.0L601.1 853.7L597.7 855.6L596.6 865.3M669.8 754.3L671.5 760.7L670.9 767.7L682.7 768.9L684.9 778.9L691.0 778.9L689.4 788.4M644.7 768.3L653.6 777.7L665.9 783.7L672.6 788.4L667.0 798.0L679.3 799.2L682.1 798.6L689.4 788.4M689.4 788.4L693.8 789.0L693.8 797.4L687.1 802.8L681.5 806.5L672.6 816.2M672.6 816.2L681.5 819.9L683.8 820.5L689.4 824.2L693.8 827.9L697.7 831.6L696.1 837.9M672.6 816.2L671.5 824.2L669.2 830.4L668.1 839.8M620.6 635.5L627.9 637.2L629.6 636.1L636.3 631.6L640.2 629.9L636.8 628.2L635.7 619.3L643.5 619.8L644.1 621.5L648.6 619.3L655.3 613.1M655.3 613.1L651.4 609.2L653.0 604.7L657.5 602.5L655.8 598.5L660.3 595.7L659.2 594.6M655.3 613.1L658.6 614.2L659.7 617.6L662.0 620.4L659.7 628.8L660.9 632.1L665.9 635.5L670.4 633.8L678.7 631.6M675.4 609.2L674.3 613.1L670.9 616.5L670.4 621.5L674.8 626.5L678.7 631.6M678.7 631.6L682.1 628.2L689.9 629.3M692.7 610.3L690.5 614.8L692.7 622.1L689.9 629.3M689.9 629.3L698.9 629.9L703.9 621.5L705.9 619.3M1134.2 459.6L1134.2 517.3M1134.2 517.3L1200.7 517.3M1134.2 517.3L1134.2 528.9L1128.6 528.9L1128.6 531.9M1128.6 531.9L1083.9 508.7L1078.3 511.4L1073.9 513.7M1073.9 513.7L1061.6 508.4M1061.6 508.4L1050.4 502.5L1047.0 492.4L1049.8 482.2L1048.2 468.2M1047.9 468.2L1052.1 463.9L1052.1 459.0L1058.8 453.4L1058.8 449.9M1047.9 468.2L1044.8 456.5L1040.9 453.4L1036.4 445.9L1040.9 438.3L1040.9 428.8L1042.6 425.9M982.2 437.7L985.0 446.5L987.2 454.6L977.7 458.3L973.8 463.9L965.4 469.4L955.4 471.9L946.0 477.3L946.0 483.6M946.0 483.6L920.7 483.6M946.0 483.6L946.0 493.6L927.4 493.6L927.4 508.7L921.8 511.4L921.3 521.2L900.1 521.2M946.0 485.8L967.7 499.6M967.7 499.6L1000.6 522.5L1001.2 524.9L1012.4 530.1L1012.9 534.7L1018.0 534.2M1018.0 534.2L1026.9 531.9L1061.6 508.4M967.7 499.6L958.2 499.6L963.8 549.2L964.9 554.9L942.5 554.9L933.6 557.2L930.2 554.3L926.3 558.9M926.3 558.9L919.1 551.5L913.5 548.3L903.4 549.2L902.3 551.5M1018.0 534.2L1018.0 546.9L1014.1 555.5L1001.8 556.0L995.6 558.3M1078.3 511.4L1081.1 523.1L1081.7 529.5L1081.1 546.9L1069.9 561.2L1070.5 565.2M1070.5 565.2L1064.4 568.6L1050.4 568.0L1038.1 567.4L1033.1 569.1L1022.4 565.2L1017.4 566.3L1014.6 576.5M1128.6 531.9L1128.6 553.7L1122.5 554.9L1117.4 569.1L1120.2 580.5L1123.0 582.2L1126.4 591.8M1070.5 565.2L1073.3 569.1L1075.5 570.3L1078.3 580.5L1081.1 586.1L1072.7 586.1L1078.3 593.5L1079.4 600.2M1079.4 600.2L1086.7 598.5L1097.9 597.4L1100.7 591.8L1109.1 590.6L1115.8 583.3L1120.2 580.5M1126.4 591.8L1131.4 593.5L1135.3 598.5L1142.0 605.3L1147.6 613.1M1126.4 591.8L1128.6 586.1L1134.2 584.4L1142.6 589.0L1151.0 589.5L1159.4 586.1L1167.7 587.5L1175.6 576.5L1180.0 573.7L1178.9 582.2L1184.5 589.0M1200.7 517.3L1201.3 520.2M1184.5 589.0L1185.1 594.6L1178.9 598.5L1184.5 605.8L1191.8 612.6L1195.7 617.3M1184.5 589.0L1186.2 582.7L1190.1 580.5L1194.6 570.9L1198.5 561.7L1197.9 557.2L1201.3 546.3L1210.2 540.5M1198.5 561.7L1206.3 558.3L1212.5 560.0L1222.5 562.3L1231.5 572.0M1231.5 572.0L1228.1 580.5L1234.2 580.8L1235.9 577.7M1234.2 580.8L1233.1 582.7L1240.4 591.8L1257.2 597.4L1262.8 597.4L1246.0 614.2L1234.8 616.5L1229.2 619.8L1228.7 620.1M1262.8 597.4L1268.3 591.8L1268.3 578.8M1195.7 617.3L1206.9 622.1L1215.2 623.2L1223.6 620.4L1228.7 620.1L1223.6 626.5L1223.6 642.2L1226.7 651.4M1195.7 617.3L1190.1 616.5L1184.5 618.7M1184.5 618.7L1187.3 625.4L1190.1 631.6L1187.3 636.1L1184.5 641.1L1184.0 647.8M1184.0 647.8L1204.6 659.0L1205.2 661.8L1213.6 668.5M1184.5 618.7L1178.9 621.0L1167.7 621.5L1166.6 622.6M1166.6 622.6L1159.4 617.0L1147.6 613.1M1166.6 622.6L1169.4 629.9L1161.0 638.3L1159.9 650.0M1184.0 647.8L1165.0 648.1L1159.9 650.0M1159.9 650.0L1156.6 657.3L1157.7 666.8L1158.8 667.1M1165.0 648.1L1166.6 655.6L1162.2 666.8L1158.8 667.1M1147.6 613.1L1135.9 613.1L1122.5 615.9L1119.7 619.3L1109.6 617.6L1103.5 613.7L1098.4 618.2L1098.4 622.6M1098.4 622.6L1095.7 629.3L1094.0 640.5L1092.9 645.6L1085.0 654.5L1085.0 661.2L1083.4 664.6L1075.0 669.6L1069.4 669.6L1067.2 667.9L1061.6 670.2M1098.4 622.6L1086.7 624.3L1084.5 632.7L1075.5 629.9L1068.8 629.9M1079.4 600.2L1075.5 608.1L1076.7 616.5L1084.5 632.7M1068.8 629.9L1057.9 629.9L1057.9 636.6L1049.3 636.6M1068.8 629.9L1075.0 634.4L1075.5 645.6L1071.6 656.2L1059.3 655.1L1056.5 664.0M1049.3 629.3L1057.9 629.9M1042.0 615.9L1046.5 606.4L1053.2 603.0L1057.7 605.8L1061.6 600.2L1066.0 592.9L1071.6 580.5L1076.1 577.7L1073.3 569.1M1014.6 576.5L1014.6 586.1L1010.1 591.8L1009.6 606.4M1003.4 607.5L1003.4 591.8L999.0 583.9L999.5 580.5M993.4 579.9L999.5 580.5L1007.9 575.4L1007.9 573.1L1014.6 576.5M999.5 580.5L994.5 582.7L996.7 594.6L997.9 603.6L1001.2 608.1M978.3 613.7L976.6 604.1L980.5 596.3L978.9 589.0L978.3 580.5L993.4 579.9M995.6 558.3L990.6 557.2L983.3 562.3L977.7 565.2L970.5 568.6L969.9 573.1L964.9 576.0L963.8 583.9M978.3 580.5L963.8 583.9M995.6 558.3L996.7 563.5L1000.1 569.1L1006.8 570.9L1007.9 573.1M963.8 583.9L959.9 583.3L950.4 585.0L948.1 580.5L944.2 572.6L936.9 573.7L930.8 572.6L930.8 569.1L926.3 558.9M952.6 617.9L953.1 609.5L947.0 605.8L948.1 599.6L950.4 585.0M948.1 599.6L942.0 600.8L941.4 595.1L936.9 594.6L935.3 595.7L930.2 603.6M936.9 594.6L935.3 590.1L931.9 586.1L924.6 586.7L920.2 591.5M930.8 572.6L917.9 571.4L917.9 576.5L912.3 577.7L910.7 580.8M917.9 571.4L907.9 571.1L901.2 572.8M900.6 565.7L910.7 564.6L917.4 567.2L910.7 568.0L900.6 568.6M1062.7 675.2L1067.2 675.2L1072.7 674.9L1087.3 675.2L1089.5 683.1L1100.7 687.0L1116.3 683.1L1117.4 705.0L1128.6 703.4L1128.6 715.3M1128.6 715.3L1117.4 715.3L1117.4 733.5L1125.3 741.6M1060.2 739.5L1072.7 740.4L1097.3 740.4L1114.1 743.3L1125.3 741.6L1133.7 741.0L1135.6 742.7M1135.6 742.7L1111.9 745.6L1111.9 767.1L1106.3 767.1L1106.3 805.2M1086.7 806.5L1091.7 807.1L1096.2 808.3L1105.7 805.2L1106.3 805.2M1106.3 783.7L1110.7 796.2L1117.4 792.6L1123.0 786.6L1135.9 789.3L1144.8 777.1L1158.8 768.3M1135.6 742.7L1140.9 753.7L1149.3 758.4L1158.8 768.3M1158.8 768.3L1169.4 769.5L1173.1 781.3L1173.1 790.5L1173.9 795.9L1178.4 795.9M1169.4 769.5L1175.6 763.0L1178.9 754.3L1177.2 749.1L1178.9 740.4L1173.3 735.0L1164.4 732.4L1164.4 730.1M1135.6 742.7L1145.4 743.6L1156.0 732.1L1164.4 730.1M1128.6 715.3L1128.6 706.2L1136.4 705.0L1146.5 707.3L1153.2 712.4L1156.6 717.5L1161.0 717.8L1161.0 710.4L1153.2 709.0L1154.3 693.8L1166.3 688.1M1164.4 730.1L1180.0 720.9L1178.4 706.7L1180.6 696.0L1178.4 694.9M1166.3 688.1L1178.4 694.9L1184.5 695.7M1187.3 707.0L1194.6 706.5L1204.1 707.9L1209.7 705.6L1220.3 701.1M1180.6 696.0L1186.2 709.6L1187.6 718.7L1195.1 726.1L1194.6 732.4L1191.2 738.7L1185.9 723.8L1180.0 720.9M1158.8 667.1L1158.2 661.2M1158.8 667.1L1166.6 667.9M1151.0 808.3L1145.4 812.8L1151.5 819.0L1157.7 814.4L1155.5 808.3L1151.0 808.3M1167.7 789.0L1166.6 795.6L1169.4 798.6L1173.3 795.6L1173.1 790.5M1186.0 462.0L1189.5 472.5M1193.2 449.3L1193.5 454.6L1192.6 460.2L1190.1 472.2M1190.7 450.3L1193.2 449.3L1195.1 448.4M1195.1 432.6L1197.9 430.7L1199.6 426.8L1206.9 426.5L1218.0 427.5L1231.2 424.9M1195.1 448.4L1197.9 440.8L1195.4 440.5M1195.1 448.4L1200.2 454.9L1211.3 448.7L1223.6 442.1L1225.3 429.4L1231.2 424.9M1200.2 454.9L1213.6 456.2L1201.3 460.2L1206.9 466.4L1204.1 469.4L1195.7 474.3L1189.8 473.4M1213.6 456.2L1220.3 457.7L1229.8 462.7L1244.3 474.3L1254.4 474.9L1259.4 475.5L1261.1 478.5L1265.0 478.2M1254.4 474.9L1260.0 469.4L1262.5 469.4M1231.2 424.9L1241.5 424.9L1244.9 424.6M1244.9 424.6L1248.2 432.0L1251.6 433.9L1248.2 444.6L1252.1 450.9L1261.9 458.3L1261.1 463.3L1265.5 469.7M1244.9 424.6L1240.4 410.0L1244.9 408.0M1226.7 396.1L1232.6 395.4L1237.3 398.8L1238.4 405.4L1244.9 408.0M1244.9 408.0L1252.4 413.6L1262.2 408.3L1264.7 410.3L1262.8 413.6L1267.8 416.5M1237.3 398.8L1246.0 397.8L1254.4 398.8L1254.9 394.1L1266.1 393.7M1218.0 383.3L1231.5 384.6L1239.8 388.7L1250.5 389.4L1253.8 393.4L1254.9 394.1M1295.7 423.3L1300.8 422.7L1308.6 418.5L1314.7 419.1L1325.9 422.3L1336.5 427.8M1336.5 427.8L1332.6 444.0L1334.3 460.2L1339.9 463.3L1334.6 470.3M1334.6 470.3L1339.9 477.9L1345.5 480.1L1345.5 486.4L1348.3 489.7L1340.2 492.4L1338.8 498.4M1334.6 470.3L1343.8 473.1L1353.3 472.5L1365.0 470.0L1365.6 463.3L1373.4 460.8L1381.8 457.7L1382.9 450.9L1387.4 449.0L1385.7 444.6L1391.8 442.4L1394.6 437.0L1394.6 429.4L1406.9 426.2L1411.4 425.2M1336.5 427.8L1343.8 436.4L1355.0 429.4L1366.1 423.3L1373.4 424.3L1374.5 425.6M1374.5 425.6L1381.8 424.9L1386.8 421.7L1391.3 416.2L1394.6 419.8L1394.6 427.5L1404.1 422.7L1413.1 424.0M1287.9 394.4L1296.3 390.7L1304.7 397.4L1307.5 397.4L1313.0 397.4L1322.0 387.4L1329.8 391.4L1340.4 398.8L1343.2 406.0L1353.3 412.9L1366.7 419.4L1366.1 423.3M1307.5 397.4L1307.5 372.3L1322.0 368.2L1335.4 376.5L1341.0 382.6L1357.2 381.2L1363.9 386.0L1363.3 392.7L1375.1 399.4L1380.1 396.8L1390.7 391.1L1391.3 390.7M1366.7 419.4L1373.4 424.3M1375.1 399.4L1377.9 404.7L1388.5 406.0L1389.1 404.7L1402.5 400.7L1405.8 409.7M1391.3 390.7L1405.3 390.1L1409.2 384.6L1418.1 386.7L1436.0 387.4L1442.7 392.4M1405.8 409.7L1395.8 410.6L1388.5 406.0M1405.8 409.7L1407.5 415.9L1413.1 416.5L1413.1 424.0M1268.3 361.9L1265.5 352.7L1257.2 349.5L1254.4 348.4L1259.4 334.7L1266.7 332.5L1278.4 325.1L1299.1 329.5L1305.8 332.5L1322.0 329.1L1337.6 331.0L1329.8 330.6L1338.8 327.7L1334.8 317.6L1336.0 307.3L1358.9 304.3L1375.6 299.2L1391.3 298.4L1390.2 311.9L1404.7 310.8L1422.0 305.4L1424.3 310.8L1441.6 331.0M1371.7 506.1L1375.6 507.9L1379.0 503.7L1385.7 504.3L1391.8 501.3L1387.9 495.4L1386.3 490.0L1382.9 487.6L1389.1 481.6L1396.9 481.6L1404.7 470.0L1410.3 463.3L1411.4 457.1L1415.9 455.2L1408.1 449.6L1408.1 444.6L1407.8 440.5L1418.1 441.5L1429.3 435.1M1413.1 424.0L1418.7 428.1L1429.3 435.1L1435.4 442.7L1434.9 447.8L1437.1 454.0L1434.3 460.2L1441.6 464.5M1413.1 424.0L1413.1 416.5M945.0 393.7L949.2 392.7L957.6 393.1L959.9 395.4L956.2 399.4L955.4 408.0L952.6 408.7L955.4 417.8L953.1 424.3M984.7 383.6L990.6 386.7L998.4 387.4L1002.6 388.7L1012.1 389.7M1036.4 380.6L1037.5 377.8L1033.1 376.5L1033.6 370.9L1032.5 366.8L1033.6 366.1M1028.9 364.3L1033.6 366.1L1038.4 365.7L1041.7 362.2L1044.8 366.4L1046.5 361.9L1052.9 359.1M1052.9 359.1L1062.4 358.0L1063.8 360.5L1071.1 361.9M1028.9 364.3L1028.6 361.2L1033.6 354.8L1037.0 354.1M1037.0 354.1L1042.6 352.7L1047.9 354.5M1047.9 354.5L1048.2 358.0L1052.9 359.1M1037.0 354.1L1037.0 350.6L1040.3 344.1L1031.9 342.7L1030.0 340.8M1030.0 340.8L1026.9 340.1L1021.6 335.8L1018.0 337.2L1008.8 328.8M1030.0 340.8L1028.6 336.1L1028.0 331.3M1013.2 326.9L1018.5 326.9L1022.4 326.2L1027.2 328.4L1028.0 331.3M1028.0 331.3L1027.8 323.6L1032.5 322.5L1033.9 317.2L1034.7 312.7M1047.9 354.5L1052.9 354.5L1067.2 354.8L1065.8 350.6L1071.6 345.9M1071.6 345.9L1062.1 334.7L1074.4 329.1L1077.2 330.6M1077.2 330.6L1085.6 332.1L1088.9 335.4L1099.8 340.5M1071.6 345.9L1078.0 344.1L1089.2 347.0M1089.2 347.0L1099.8 340.5M1077.2 330.6L1076.1 317.6L1073.6 315.7L1074.1 307.7M1042.8 300.0L1047.3 300.8M1089.2 347.0L1090.3 351.3L1084.5 359.4M1071.1 361.9L1075.8 362.6L1084.5 359.4M1084.5 359.4L1087.0 361.9L1099.8 366.1M1090.3 351.3L1099.3 352.7L1110.7 347.3L1118.3 348.4M1099.8 340.5L1106.8 342.7L1120.5 343.4M1120.5 343.4L1118.3 348.4M1120.5 343.4L1129.2 330.6L1126.4 325.8L1126.7 321.3L1128.1 316.8L1125.8 307.3M1104.3 303.5L1121.9 304.3L1125.8 307.3M1071.1 361.9L1069.4 365.4L1071.1 368.2M1070.5 368.9L1080.0 369.2L1082.0 364.0L1087.0 361.9M1099.8 366.1L1100.7 373.4L1104.0 379.2L1101.8 382.6L1097.6 389.0M1082.5 370.9L1088.9 370.6L1100.7 373.4M1082.5 370.9L1083.9 379.2L1092.9 386.0L1097.6 389.0M1099.8 366.1L1107.7 364.3M1107.7 364.3L1113.0 362.6L1118.3 348.4M1107.7 364.3L1114.1 373.4L1120.2 375.4L1121.1 377.8M1118.3 348.4L1122.5 351.6L1133.7 353.0L1143.2 349.5L1151.5 359.8L1152.1 369.2M1143.2 349.5L1148.2 348.1L1157.4 351.6L1161.9 361.2L1162.2 362.6M1152.1 369.2L1160.2 370.2M1121.1 377.8L1122.5 380.2L1136.4 381.6L1145.4 378.2L1154.3 380.9M1121.1 377.8L1119.7 390.7M1102.9 393.4L1106.8 388.7L1109.6 393.4L1109.1 398.1L1111.9 400.4M1106.3 408.0L1111.9 400.4M1111.9 400.4L1122.5 397.1M1119.7 390.7L1122.5 397.1M1109.6 393.4L1119.7 390.7M1122.5 397.1L1131.4 395.8L1140.1 394.8L1141.8 394.8M1140.1 401.1L1141.8 394.8L1151.0 392.7M1125.8 307.3L1128.3 305.4L1121.9 304.3M1128.3 305.4L1137.3 304.6L1144.3 296.9L1143.2 293.8M1112.1 291.0L1122.2 288.2L1133.7 287.8L1143.2 293.8M1143.2 293.8L1151.8 290.2L1149.9 280.7L1147.3 279.1M1130.6 276.2L1139.8 276.6L1147.3 279.1M1147.3 279.1L1149.3 268.1L1151.5 263.5M1126.7 321.3L1137.0 322.8L1148.2 325.1L1165.2 327.3L1172.2 321.3M1151.8 290.2L1167.5 294.5L1166.6 300.8L1177.2 311.5L1170.0 313.0L1172.2 321.3M1172.2 321.3L1185.1 324.7L1193.5 333.9L1206.9 337.6L1218.6 339.8L1216.9 351.3L1208.0 357.7M1156.3 177.3L1153.5 182.6L1161.9 190.3L1157.1 197.9L1162.7 209.1L1159.9 216.4L1165.2 223.6L1170.8 234.2L1149.9 254.4M1109.6 177.3L1115.2 174.8L1126.7 188.0L1125.6 192.7L1128.6 198.9L1126.7 203.5L1129.5 208.2M1109.6 177.3L1106.8 177.3L1095.9 182.2L1094.5 188.0L1086.2 192.2L1080.6 201.7L1075.5 204.9L1070.8 219.1L1073.6 222.7L1062.4 228.0L1062.7 244.6L1066.6 247.6L1064.1 250.1L1064.9 255.6L1060.4 259.8L1058.5 268.1L1057.1 266.4M1109.6 177.3L1113.5 174.8L1119.7 180.7L1138.4 174.8L1139.8 170.9L1150.4 166.9L1156.3 177.3L1166.9 169.9" fill="none" stroke="#11151e" stroke-width="1" stroke-linejoin="round"/><circle cx="323.9" cy="356.4" r="30.4" fill="rgba(205,84,86,0.46)" stroke="#d96560" stroke-width="1.8"/><circle cx="317.5" cy="378.7" r="10.3" fill="rgba(66,69,77,0.55)" stroke="#4c5057" stroke-width="1.8"/><circle cx="308.0" cy="420.2" r="8.6" fill="rgba(138,24,30,0.62)" stroke="#9c2229" stroke-width="1.8"/><circle cx="332.0" cy="444.2" r="8.6" fill="rgba(66,69,77,0.55)" stroke="#4c5057" stroke-width="1.8"/><circle cx="365.8" cy="447.6" r="8.6" fill="rgba(205,84,86,0.46)" stroke="#d96560" stroke-width="1.8"/><circle cx="457.9" cy="397.5" r="8.6" fill="rgba(205,84,86,0.46)" stroke="#d96560" stroke-width="1.8"/><circle cx="470.3" cy="395.4" r="8.6" fill="rgba(205,84,86,0.46)" stroke="#d96560" stroke-width="1.8"/><circle cx="503.7" cy="393.2" r="8.6" fill="rgba(205,84,86,0.46)" stroke="#d96560" stroke-width="1.8"/><circle cx="549.9" cy="381.2" r="8.6" fill="rgba(205,84,86,0.46)" stroke="#d96560" stroke-width="1.8"/><circle cx="582.0" cy="368.8" r="8.6" fill="rgba(66,69,77,0.55)" stroke="#4c5057" stroke-width="1.8"/><circle cx="532.0" cy="404.0" r="8.6" fill="rgba(138,24,30,0.62)" stroke="#9c2229" stroke-width="1.8"/><circle cx="553.8" cy="424.5" r="22.3" fill="rgba(138,24,30,0.62)" stroke="#9c2229" stroke-width="1.8"/><circle cx="547.8" cy="422.8" r="8.6" fill="rgba(138,24,30,0.62)" stroke="#9c2229" stroke-width="1.8"/><circle cx="545.6" cy="448.5" r="8.6" fill="rgba(205,84,86,0.46)" stroke="#d96560" stroke-width="1.8"/><circle cx="957.9" cy="311.9" r="8.6" fill="rgba(66,69,77,0.55)" stroke="#4c5057" stroke-width="1.8"/><circle cx="992.1" cy="325.6" r="8.6" fill="rgba(66,69,77,0.55)" stroke="#4c5057" stroke-width="1.8"/><circle cx="1022.1" cy="319.2" r="8.6" fill="rgba(138,24,30,0.62)" stroke="#9c2229" stroke-width="1.8"/><circle cx="1041.8" cy="336.3" r="8.6" fill="rgba(138,24,30,0.62)" stroke="#9c2229" stroke-width="1.8"/><circle cx="1041.8" cy="355.1" r="8.6" fill="rgba(138,24,30,0.62)" stroke="#9c2229" stroke-width="1.8"/><circle cx="1005.8" cy="362.4" r="8.6" fill="rgba(205,84,86,0.46)" stroke="#d96560" stroke-width="1.8"/><circle cx="1089.3" cy="252.9" r="8.6" fill="rgba(205,84,86,0.46)" stroke="#d96560" stroke-width="1.8"/><circle cx="1093.6" cy="264.5" r="8.6" fill="rgba(66,69,77,0.55)" stroke="#4c5057" stroke-width="1.8"/><circle cx="1187.9" cy="459.6" r="8.6" fill="rgba(138,24,30,0.62)" stroke="#9c2229" stroke-width="1.8"/><circle cx="1401.9" cy="533.5" r="8.6" fill="rgba(138,24,30,0.62)" stroke="#9c2229" stroke-width="1.8"/></svg><div class="bx" style="left:2px;top:2px;width:56px;height:112px;background:#f7f7f7;border-radius:2px 4px 5px 5px"></div><div class="bx" style="left:2px;top:56px;width:56px;height:1.6px;background:#c9c9c9"></div><div class="t " id="t50" style="font-size:26px;font-weight:700;color:#222222;left:22.3px;top:17.2px;">+</div><div class="t " id="t51" style="font-size:26px;font-weight:700;color:#222222;left:25.6px;top:71.0px;">-</div><div class="bx" style="left:1435px;top:42px;width:600px;height:860px;background:#151515;border:2px solid #333437;border-radius:22px 22px 0 0"></div><div class="bx" style="left:1437px;top:157px;width:596px;height:2px;background:#333437"></div><div class="t " id="t52" style="font-size:29px;font-weight:400;color:#ebebeb;font-style:italic;letter-spacing:0.056px;left:1476.0px;top:82.6px;">Data Patterns</div><svg width="20" height="14" viewBox="0 0 20 14" style="left:1665.5px;top:94px"><path d="M3.5 3.5L10 10L16.5 3.5" fill="none" stroke="#d8d8d8" stroke-width="2.2" stroke-linecap="round" stroke-linejoin="round"/></svg><div class="bx" style="left:1477.4px;top:179.5px;width:306.2px;height:46.8px;border:2px solid #4a4a4c;border-radius:4px"></div><div class="bx" style="left:1483.4px;top:185.1px;width:8px;height:35.6px;background:#2f4f4a"></div><div class="bx" style="left:1708.0px;top:185.1px;width:2px;height:35.6px;background:#4a4a4c"></div><div class="t " id="t53" style="font-size:24.3px;font-weight:400;color:#f0f0f0;letter-spacing:-0.114px;left:1497.3px;top:190.8px;">Internal IP Address</div><div class="t " id="t54" style="font-size:24.3px;font-weight:400;color:#c4c4c4;letter-spacing:0.395px;left:1717.3px;top:190.8px;">4.5M</div><div class="bx" style="left:1477.4px;top:267.5px;width:255.1px;height:46.8px;border:2px solid #4a4a4c;border-radius:4px"></div><div class="bx" style="left:1483.4px;top:273.1px;width:8px;height:35.6px;background:#233a66"></div><div class="bx" style="left:1657.8px;top:273.1px;width:2px;height:35.6px;background:#4a4a4c"></div><div class="t " id="t55" style="font-size:24.3px;font-weight:400;color:#f0f0f0;letter-spacing:-0.150px;left:1497.3px;top:278.8px;">Email Address</div><div class="t " id="t56" style="font-size:24.3px;font-weight:400;color:#c4c4c4;letter-spacing:0.161px;left:1668.0px;top:278.8px;">3.8M</div><div class="bx" style="left:1477.4px;top:355.5px;width:264.1px;height:46.8px;border:2px solid #4a4a4c;border-radius:4px"></div><div class="bx" style="left:1483.4px;top:361.1px;width:8px;height:35.6px;background:#233a66"></div><div class="bx" style="left:1668.0px;top:361.1px;width:2px;height:35.6px;background:#4a4a4c"></div><div class="t " id="t57" style="font-size:24.3px;font-weight:400;color:#f0f0f0;letter-spacing:-0.012px;left:1497.3px;top:366.8px;">Phone Number</div><div class="t " id="t58" style="font-size:24.3px;font-weight:400;color:#c4c4c4;letter-spacing:-0.572px;left:1677.9px;top:366.8px;">3.7M</div><div class="bx" style="left:1477.4px;top:443.5px;width:263.3px;height:46.8px;border:2px solid #4a4a4c;border-radius:4px"></div><div class="bx" style="left:1483.4px;top:449.1px;width:8px;height:35.6px;background:#2f4f4a"></div><div class="bx" style="left:1668.0px;top:449.1px;width:2px;height:35.6px;background:#4a4a4c"></div><div class="t " id="t59" style="font-size:24.3px;font-weight:400;color:#f0f0f0;letter-spacing:0.271px;left:1497.3px;top:454.8px;">Street Address</div><div class="t " id="t60" style="font-size:24.3px;font-weight:400;color:#c4c4c4;letter-spacing:-0.605px;left:1677.5px;top:454.8px;">3.7M</div><div class="bx" style="left:1477.4px;top:531.5px;width:232.0px;height:46.8px;border:2px solid #4a4a4c;border-radius:4px"></div><div class="bx" style="left:1483.4px;top:537.1px;width:8px;height:35.6px;background:#2f4f4a"></div><div class="bx" style="left:1637.2px;top:537.1px;width:2px;height:35.6px;background:#4a4a4c"></div><div class="t " id="t61" style="font-size:24.3px;font-weight:400;color:#f0f0f0;letter-spacing:0.466px;left:1497.3px;top:542.8px;">Test pattern</div><div class="t " id="t62" style="font-size:24.3px;font-weight:400;color:#c4c4c4;letter-spacing:-0.705px;left:1647.0px;top:542.8px;">3.7M</div><div class="bx" style="left:1477.4px;top:619.5px;width:251.3px;height:46.8px;border:2px solid #4a4a4c;border-radius:4px"></div><div class="bx" style="left:1483.4px;top:625.1px;width:8px;height:35.6px;background:#3b1f5c"></div><div class="bx" style="left:1655.2px;top:625.1px;width:2px;height:35.6px;background:#4a4a4c"></div><div class="t " id="t63" style="font-size:24.3px;font-weight:400;color:#f0f0f0;letter-spacing:0.019px;left:1497.3px;top:630.8px;">IBAN (Global)</div><div class="t " id="t64" style="font-size:24.3px;font-weight:400;color:#c4c4c4;letter-spacing:-0.405px;left:1664.5px;top:630.8px;">3.6M</div><div class="bx" style="left:1477.4px;top:707.5px;width:239.3px;height:46.8px;border:2px solid #4a4a4c;border-radius:4px"></div><div class="bx" style="left:1483.4px;top:713.1px;width:8px;height:35.6px;background:#233a66"></div><div class="bx" style="left:1643.2px;top:713.1px;width:2px;height:35.6px;background:#4a4a4c"></div><div class="t " id="t65" style="font-size:24.3px;font-weight:400;color:#f0f0f0;letter-spacing:0.254px;left:1497.3px;top:718.8px;">Date of Birth</div><div class="t " id="t66" style="font-size:24.3px;font-weight:400;color:#c4c4c4;letter-spacing:-0.439px;left:1653.0px;top:718.8px;">3.6M</div><div class="bx" style="left:1477.4px;top:795.5px;width:206.2px;height:46.8px;border:2px solid #4a4a4c;border-radius:4px"></div><div class="bx" style="left:1483.4px;top:801.1px;width:8px;height:35.6px;background:#2f4f4a"></div><div class="bx" style="left:1610.2px;top:801.1px;width:2px;height:35.6px;background:#4a4a4c"></div><div class="t " id="t67" style="font-size:24.3px;font-weight:400;color:#f0f0f0;letter-spacing:-0.298px;left:1497.3px;top:806.8px;">Password</div><div class="t " id="t68" style="font-size:24.3px;font-weight:400;color:#c4c4c4;letter-spacing:-0.272px;left:1619.5px;top:806.8px;">3.6M</div></div><div class="bx" style="left:3310px;top:1838px;width:69.5px;height:69.5px;border-radius:19px;border:4.5px solid #5bbfa0;background:#10161f"></div><div class="t " id="t69" style="font-size:47.5px;font-weight:700;color:#4fb595;transform:scaleX(0.7410);left:3334.6px;top:1851.4px;">?</div>
</body></html>
